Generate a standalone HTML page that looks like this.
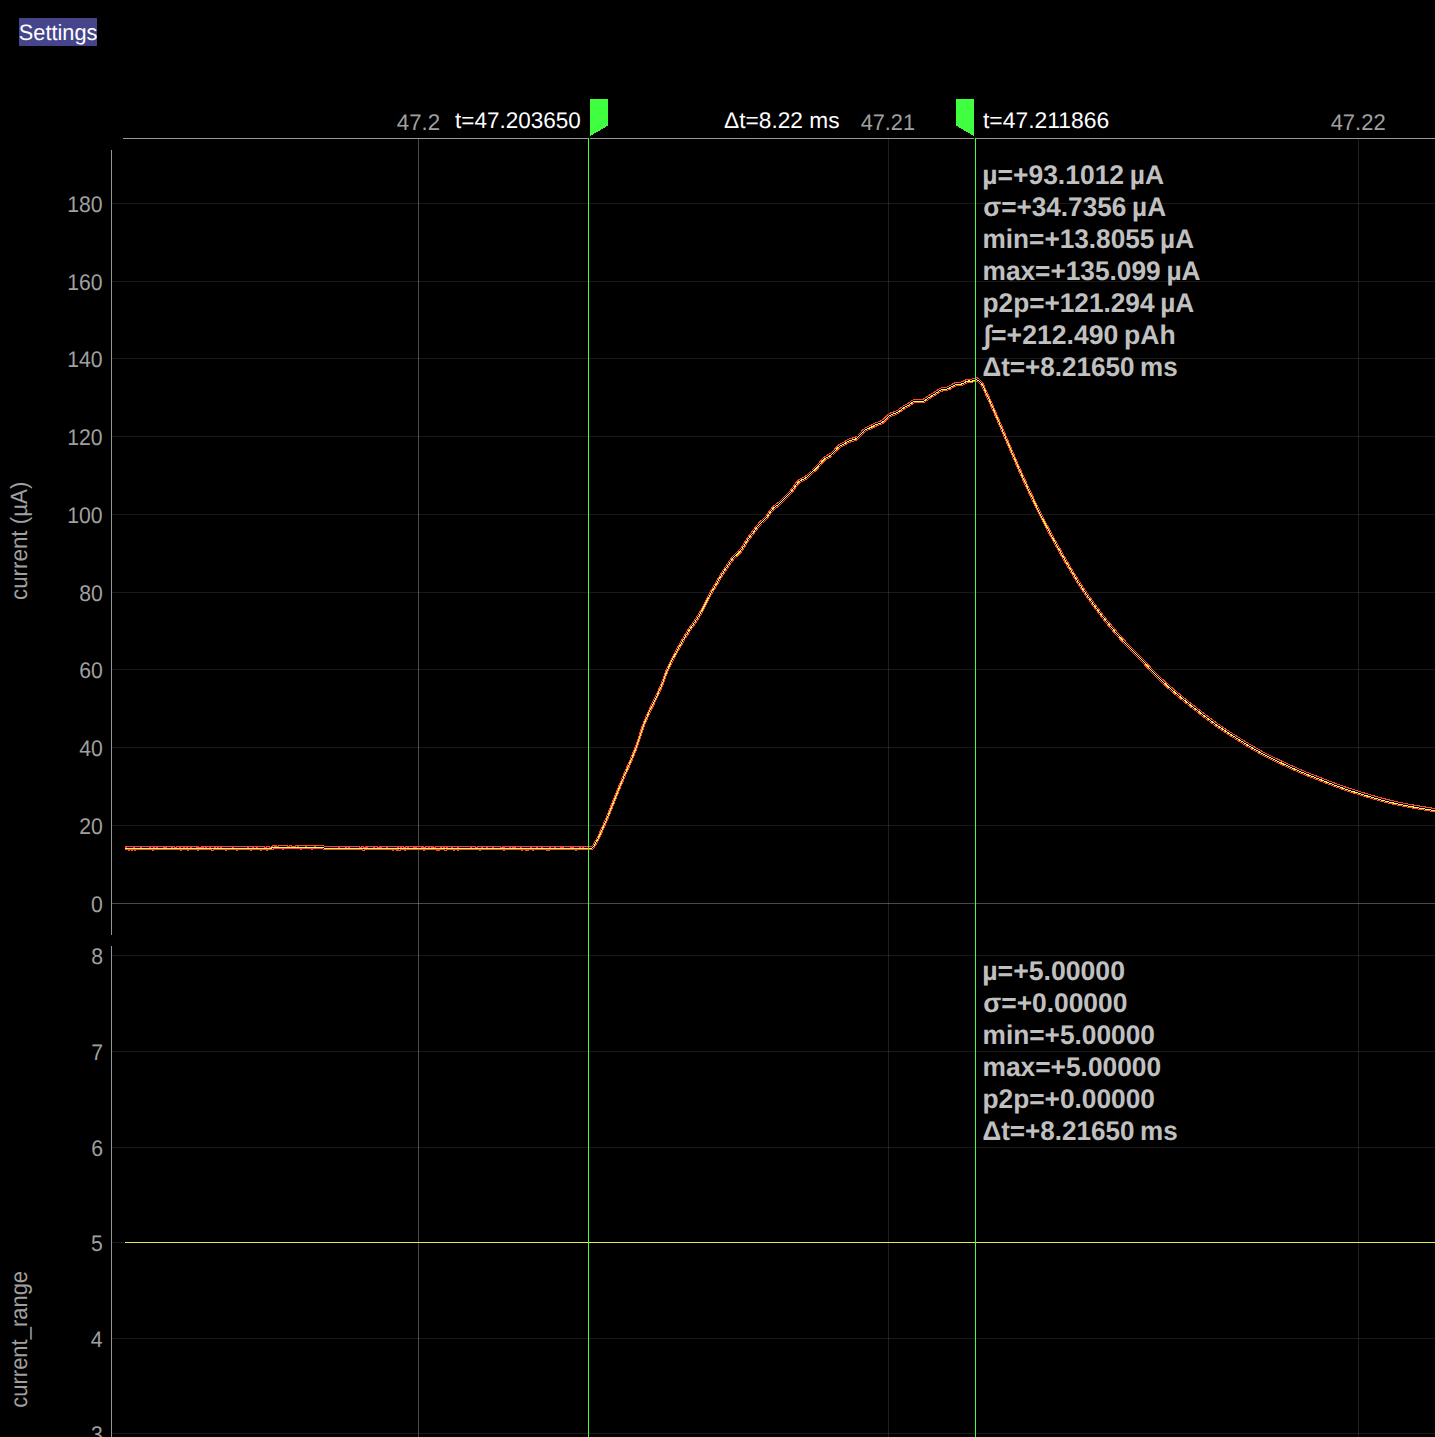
<!DOCTYPE html>
<html lang="en"><head><meta charset="utf-8"><title>Joulescope</title>
<style>
html,body{margin:0;padding:0;background:#000;}
body{width:1435px;height:1437px;overflow:hidden;position:relative;font-family:'Liberation Sans', Arial, sans-serif;}
svg{position:absolute;left:0;top:0;}
svg text{font-family:'Liberation Sans', Arial, sans-serif;white-space:pre;text-rendering:geometricPrecision;}
</style></head><body>
<svg width="1435" height="1437" viewBox="0 0 1435 1437">
<rect x="112" y="825" width="1323" height="1" fill="#969696" fill-opacity="0.17"/>
<rect x="112" y="747" width="1323" height="1" fill="#969696" fill-opacity="0.17"/>
<rect x="112" y="669" width="1323" height="1" fill="#969696" fill-opacity="0.17"/>
<rect x="112" y="592" width="1323" height="1" fill="#969696" fill-opacity="0.17"/>
<rect x="112" y="514" width="1323" height="1" fill="#969696" fill-opacity="0.17"/>
<rect x="112" y="436" width="1323" height="1" fill="#969696" fill-opacity="0.17"/>
<rect x="112" y="358" width="1323" height="1" fill="#969696" fill-opacity="0.17"/>
<rect x="112" y="281" width="1323" height="1" fill="#969696" fill-opacity="0.17"/>
<rect x="112" y="203" width="1323" height="1" fill="#969696" fill-opacity="0.17"/>
<rect x="112" y="903" width="1323" height="1" fill="#969696" fill-opacity="0.49"/>
<rect x="112" y="955" width="1323" height="1" fill="#969696" fill-opacity="0.17"/>
<rect x="112" y="1051" width="1323" height="1" fill="#969696" fill-opacity="0.17"/>
<rect x="112" y="1147" width="1323" height="1" fill="#969696" fill-opacity="0.17"/>
<rect x="112" y="1338" width="1323" height="1" fill="#969696" fill-opacity="0.17"/>
<rect x="112" y="1433" width="1323" height="1" fill="#969696" fill-opacity="0.17"/>
<rect x="112" y="1242" width="12" height="1" fill="#969696" fill-opacity="0.17"/>
<rect x="418" y="139" width="1" height="1298" fill="#969696" fill-opacity="0.49"/>
<rect x="888" y="139" width="1" height="1298" fill="#969696" fill-opacity="0.2"/>
<rect x="1358" y="139" width="1" height="1298" fill="#969696" fill-opacity="0.2"/>
<rect x="19" y="18" width="78" height="28" fill="#46458c"/>
<rect x="123" y="138" width="1312" height="1" fill="#969696"/>
<rect x="111" y="150" width="1" height="785" fill="#969696"/>
<rect x="111" y="946" width="1" height="491" fill="#969696"/>
<rect x="125" y="1242" width="1310" height="1" fill="#eaea4a"/>
<rect x="125" y="1242" width="1" height="1" fill="#ffff55"/>
<g fill="none" stroke-width="1" shape-rendering="crispEdges">
<polyline stroke="#ff4444" points="125.0,846.5 125.5,846.5 126.0,847.5 126.5,847.5 127.0,846.5 127.5,846.5 128.0,846.5 128.5,846.5 129.0,846.5 129.5,846.5 130.0,846.5 130.5,846.5 131.0,846.5 131.5,846.5 132.0,846.5 132.5,846.5 133.0,846.5 133.5,846.5 134.0,847.5 134.5,847.5 135.0,846.5 135.5,846.5 136.0,846.5 136.5,846.5 137.0,846.5 137.5,846.5 138.0,846.5 138.5,846.5 139.0,846.5 139.5,846.5 140.0,846.5 140.5,846.5 141.0,847.5 141.5,847.5 142.0,846.5 142.5,846.5 143.0,846.5 143.5,846.5 144.0,846.5 144.5,846.5 145.0,846.5 145.5,846.5 146.0,846.5 146.5,846.5 147.0,846.5 147.5,846.5 148.0,846.5 148.5,846.5 149.0,846.5 149.5,846.5 150.0,847.5 150.5,847.5 151.0,846.5 151.5,846.5 152.0,846.5 152.5,846.5 153.0,846.5 153.5,846.5 154.0,847.5 154.5,847.5 155.0,846.5 155.5,846.5 156.0,846.5 156.5,846.5 157.0,847.5 157.5,847.5 158.0,846.5 158.5,846.5 159.0,846.5 159.5,846.5 160.0,846.5 160.5,846.5 161.0,846.5 161.5,846.5 162.0,846.5 162.5,846.5 163.0,846.5 163.5,846.5 164.0,847.5 164.5,847.5 165.0,846.5 165.5,846.5 166.0,847.5 166.5,847.5 167.0,846.5 167.5,846.5 168.0,846.5 168.5,846.5 169.0,846.5 169.5,846.5 170.0,846.5 170.5,846.5 171.0,846.5 171.5,846.5 172.0,847.5 172.5,847.5 173.0,846.5 173.5,846.5 174.0,846.5 174.5,846.5 175.0,847.5 175.5,847.5 176.0,847.5 176.5,847.5 177.0,846.5 177.5,846.5 178.0,846.5 178.5,846.5 179.0,846.5 179.5,846.5 180.0,847.5 180.5,847.5 181.0,846.5 181.5,846.5 182.0,846.5 182.5,846.5 183.0,846.5 183.5,846.5 184.0,847.5 184.5,847.5 185.0,846.5 185.5,846.5 186.0,846.5 186.5,846.5 187.0,847.5 187.5,847.5 188.0,846.5 188.5,846.5 189.0,846.5 189.5,846.5 190.0,846.5 190.5,846.5 191.0,847.5 191.5,847.5 192.0,846.5 192.5,846.5 193.0,846.5 193.5,846.5 194.0,846.5 194.5,846.5 195.0,846.5 195.5,846.5 196.0,846.5 196.5,846.5 197.0,847.5 197.5,847.5 198.0,846.5 198.5,846.5 199.0,847.5 199.5,847.5 200.0,847.5 200.5,847.5 201.0,847.5 201.5,847.5 202.0,846.5 202.5,846.5 203.0,847.5 203.5,847.5 204.0,846.5 204.5,846.5 205.0,846.5 205.5,846.5 206.0,847.5 206.5,847.5 207.0,846.5 207.5,846.5 208.0,846.5 208.5,846.5 209.0,846.5 209.5,846.5 210.0,847.5 210.5,847.5 211.0,846.5 211.5,846.5 212.0,846.5 212.5,846.5 213.0,846.5 213.5,846.5 214.0,846.5 214.5,846.5 215.0,847.5 215.5,847.5 216.0,846.5 216.5,846.5 217.0,846.5 217.5,846.5 218.0,847.5 218.5,847.5 219.0,846.5 219.5,846.5 220.0,846.5 220.5,846.5 221.0,847.5 221.5,847.5 222.0,846.5 222.5,846.5 223.0,846.5 223.5,846.5 224.0,846.5 224.5,846.5 225.0,846.5 225.5,846.5 226.0,846.5 226.5,846.5 227.0,846.5 227.5,846.5 228.0,846.5 228.5,846.5 229.0,846.5 229.5,846.5 230.0,846.5 230.5,846.5 231.0,846.5 231.5,846.5 232.0,846.5 232.5,846.5 233.0,847.5 233.5,847.5 234.0,846.5 234.5,846.5 235.0,846.5 235.5,846.5 236.0,846.5 236.5,846.5 237.0,846.5 237.5,846.5 238.0,846.5 238.5,846.5 239.0,846.5 239.5,846.5 240.0,846.5 240.5,846.5 241.0,846.5 241.5,846.5 242.0,846.5 242.5,846.5 243.0,846.5 243.5,846.5 244.0,846.5 244.5,846.5 245.0,846.5 245.5,846.5 246.0,846.5 246.5,846.5 247.0,846.5 247.5,846.5 248.0,847.5 248.5,847.5 249.0,846.5 249.5,846.5 250.0,846.5 250.5,846.5 251.0,846.5 251.5,846.5 252.0,846.5 252.5,846.5 253.0,847.5 253.5,847.5 254.0,846.5 254.5,846.5 255.0,846.5 255.5,846.5 256.0,846.5 256.5,846.5 257.0,847.5 257.5,847.5 258.0,846.5 258.5,846.5 259.0,846.5 259.5,846.5 260.0,846.5 260.5,846.5 261.0,846.5 261.5,846.5 262.0,846.5 262.5,846.5 263.0,846.5 263.5,846.5 264.0,846.5 264.5,846.5 265.0,847.5 265.5,847.5 266.0,847.5 266.5,847.5 267.0,846.5 267.5,846.5 268.0,846.5 268.5,846.5 269.0,846.5 269.5,846.5 270.0,847.4 270.5,847.3 271.0,847.1 271.5,846.9 272.0,846.7 272.5,846.6 273.0,845.5 273.5,845.5 274.0,845.5 274.5,845.5 275.0,846.5 275.5,846.5 276.0,845.5 276.5,845.5 277.0,846.5 277.5,846.5 278.0,846.5 278.5,846.5 279.0,845.5 279.5,845.5 280.0,845.5 280.5,845.5 281.0,845.5 281.5,845.5 282.0,845.5 282.5,845.5 283.0,845.5 283.5,845.5 284.0,845.5 284.5,845.5 285.0,845.5 285.5,845.5 286.0,845.5 286.5,845.5 287.0,845.5 287.5,845.5 288.0,846.5 288.5,846.5 289.0,846.5 289.5,846.5 290.0,845.5 290.5,845.5 291.0,845.5 291.5,845.5 292.0,846.5 292.5,846.5 293.0,846.5 293.5,846.5 294.0,846.5 294.5,846.5 295.0,846.5 295.5,846.5 296.0,845.5 296.5,845.5 297.0,845.5 297.5,845.5 298.0,846.5 298.5,846.5 299.0,845.5 299.5,845.5 300.0,845.5 300.5,845.5 301.0,845.5 301.5,845.5 302.0,845.5 302.5,845.5 303.0,845.5 303.5,845.5 304.0,845.5 304.5,845.5 305.0,845.5 305.5,845.5 306.0,846.5 306.5,846.5 307.0,845.5 307.5,845.5 308.0,845.5 308.5,845.5 309.0,845.5 309.5,845.5 310.0,845.5 310.5,845.5 311.0,845.5 311.5,845.5 312.0,845.5 312.5,845.5 313.0,845.5 313.5,845.5 314.0,845.5 314.5,845.5 315.0,846.5 315.5,846.5 316.0,845.5 316.5,845.5 317.0,845.5 317.5,845.5 318.0,845.5 318.5,845.5 319.0,845.5 319.5,845.5 320.0,845.5 320.5,845.5 321.0,845.5 321.5,845.5 322.0,845.5 322.5,845.5 323.0,845.6 323.5,845.8 324.0,845.9 324.5,846.1 325.0,846.3 325.5,846.4 326.0,846.5 326.5,846.5 327.0,846.5 327.5,846.5 328.0,846.5 328.5,846.5 329.0,846.5 329.5,846.5 330.0,846.5 330.5,846.5 331.0,846.5 331.5,846.5 332.0,846.5 332.5,846.5 333.0,846.5 333.5,846.5 334.0,846.5 334.5,846.5 335.0,846.5 335.5,846.5 336.0,846.5 336.5,846.5 337.0,846.5 337.5,846.5 338.0,846.5 338.5,846.5 339.0,847.5 339.5,847.5 340.0,846.5 340.5,846.5 341.0,846.5 341.5,846.5 342.0,846.5 342.5,846.5 343.0,846.5 343.5,846.5 344.0,846.5 344.5,846.5 345.0,846.5 345.5,846.5 346.0,847.5 346.5,847.5 347.0,846.5 347.5,846.5 348.0,846.5 348.5,846.5 349.0,847.5 349.5,847.5 350.0,846.5 350.5,846.5 351.0,846.5 351.5,846.5 352.0,846.5 352.5,846.5 353.0,846.5 353.5,846.5 354.0,846.5 354.5,846.5 355.0,846.5 355.5,846.5 356.0,846.5 356.5,846.5 357.0,846.5 357.5,846.5 358.0,846.5 358.5,846.5 359.0,846.5 359.5,846.5 360.0,847.5 360.5,847.5 361.0,847.5 361.5,847.5 362.0,846.5 362.5,846.5 363.0,846.5 363.5,846.5 364.0,847.5 364.5,847.5 365.0,847.5 365.5,847.5 366.0,846.5 366.5,846.5 367.0,847.5 367.5,847.5 368.0,846.5 368.5,846.5 369.0,846.5 369.5,846.5 370.0,846.5 370.5,846.5 371.0,846.5 371.5,846.5 372.0,846.5 372.5,846.5 373.0,846.5 373.5,846.5 374.0,847.5 374.5,847.5 375.0,846.5 375.5,846.5 376.0,846.5 376.5,846.5 377.0,846.5 377.5,846.5 378.0,847.5 378.5,847.5 379.0,847.5 379.5,847.5 380.0,846.5 380.5,846.5 381.0,847.5 381.5,847.5 382.0,846.5 382.5,846.5 383.0,846.5 383.5,846.5 384.0,846.5 384.5,846.5 385.0,846.5 385.5,846.5 386.0,846.5 386.5,846.5 387.0,847.5 387.5,847.5 388.0,846.5 388.5,846.5 389.0,846.5 389.5,846.5 390.0,846.5 390.5,846.5 391.0,846.5 391.5,846.5 392.0,846.5 392.5,846.5 393.0,846.5 393.5,846.5 394.0,846.5 394.5,846.5 395.0,846.5 395.5,846.5 396.0,846.5 396.5,846.5 397.0,846.5 397.5,846.5 398.0,847.5 398.5,847.5 399.0,846.5 399.5,846.5 400.0,846.5 400.5,846.5 401.0,847.5 401.5,847.5 402.0,846.5 402.5,846.5 403.0,846.5 403.5,846.5 404.0,847.5 404.5,847.5 405.0,847.5 405.5,847.5 406.0,846.5 406.5,846.5 407.0,846.5 407.5,846.5 408.0,847.5 408.5,847.5 409.0,846.5 409.5,846.5 410.0,846.5 410.5,846.5 411.0,846.5 411.5,846.5 412.0,846.5 412.5,846.5 413.0,846.5 413.5,846.5 414.0,847.5 414.5,847.5 415.0,846.5 415.5,846.5 416.0,847.5 416.5,847.5 417.0,846.5 417.5,846.5 418.0,846.5 418.5,846.5 419.0,846.5 419.5,846.5 420.0,846.5 420.5,846.5 421.0,846.5 421.5,846.5 422.0,847.5 422.5,847.5 423.0,846.5 423.5,846.5 424.0,847.5 424.5,847.5 425.0,847.5 425.5,847.5 426.0,846.5 426.5,846.5 427.0,846.5 427.5,846.5 428.0,846.5 428.5,846.5 429.0,847.5 429.5,847.5 430.0,846.5 430.5,846.5 431.0,846.5 431.5,846.5 432.0,847.5 432.5,847.5 433.0,846.5 433.5,846.5 434.0,847.5 434.5,847.5 435.0,847.5 435.5,847.5 436.0,846.5 436.5,846.5 437.0,846.5 437.5,846.5 438.0,846.5 438.5,846.5 439.0,846.5 439.5,846.5 440.0,846.5 440.5,846.5 441.0,847.5 441.5,847.5 442.0,846.5 442.5,846.5 443.0,846.5 443.5,846.5 444.0,847.5 444.5,847.5 445.0,846.5 445.5,846.5 446.0,846.5 446.5,846.5 447.0,847.5 447.5,847.5 448.0,846.5 448.5,846.5 449.0,846.5 449.5,846.5 450.0,846.5 450.5,846.5 451.0,846.5 451.5,846.5 452.0,847.5 452.5,847.5 453.0,846.5 453.5,846.5 454.0,846.5 454.5,846.5 455.0,846.5 455.5,846.5 456.0,846.5 456.5,846.5 457.0,846.5 457.5,846.5 458.0,847.5 458.5,847.5 459.0,846.5 459.5,846.5 460.0,846.5 460.5,846.5 461.0,846.5 461.5,846.5 462.0,846.5 462.5,846.5 463.0,846.5 463.5,846.5 464.0,846.5 464.5,846.5 465.0,846.5 465.5,846.5 466.0,846.5 466.5,846.5 467.0,846.5 467.5,846.5 468.0,846.5 468.5,846.5 469.0,846.5 469.5,846.5 470.0,846.5 470.5,846.5 471.0,847.5 471.5,847.5 472.0,846.5 472.5,846.5 473.0,846.5 473.5,846.5 474.0,846.5 474.5,846.5 475.0,846.5 475.5,846.5 476.0,847.5 476.5,847.5 477.0,847.5 477.5,847.5 478.0,846.5 478.5,846.5 479.0,846.5 479.5,846.5 480.0,846.5 480.5,846.5 481.0,846.5 481.5,846.5 482.0,847.5 482.5,847.5 483.0,846.5 483.5,846.5 484.0,846.5 484.5,846.5 485.0,846.5 485.5,846.5 486.0,846.5 486.5,846.5 487.0,847.5 487.5,847.5 488.0,846.5 488.5,846.5 489.0,846.5 489.5,846.5 490.0,846.5 490.5,846.5 491.0,846.5 491.5,846.5 492.0,846.5 492.5,846.5 493.0,847.5 493.5,847.5 494.0,846.5 494.5,846.5 495.0,846.5 495.5,846.5 496.0,846.5 496.5,846.5 497.0,846.5 497.5,846.5 498.0,846.5 498.5,846.5 499.0,846.5 499.5,846.5 500.0,846.5 500.5,846.5 501.0,847.5 501.5,847.5 502.0,847.5 502.5,847.5 503.0,846.5 503.5,846.5 504.0,847.5 504.5,847.5 505.0,846.5 505.5,846.5 506.0,846.5 506.5,846.5 507.0,846.5 507.5,846.5 508.0,846.5 508.5,846.5 509.0,846.5 509.5,846.5 510.0,847.5 510.5,847.5 511.0,846.5 511.5,846.5 512.0,846.5 512.5,846.5 513.0,847.5 513.5,847.5 514.0,846.5 514.5,846.5 515.0,847.5 515.5,847.5 516.0,846.5 516.5,846.5 517.0,846.5 517.5,846.5 518.0,846.5 518.5,846.5 519.0,846.5 519.5,846.5 520.0,846.5 520.5,846.5 521.0,847.5 521.5,847.5 522.0,846.5 522.5,846.5 523.0,846.5 523.5,846.5 524.0,846.5 524.5,846.5 525.0,846.5 525.5,846.5 526.0,846.5 526.5,846.5 527.0,846.5 527.5,846.5 528.0,846.5 528.5,846.5 529.0,846.5 529.5,846.5 530.0,846.5 530.5,846.5 531.0,847.5 531.5,847.5 532.0,846.5 532.5,846.5 533.0,846.5 533.5,846.5 534.0,846.5 534.5,846.5 535.0,846.5 535.5,846.5 536.0,846.5 536.5,846.5 537.0,847.5 537.5,847.5 538.0,846.5 538.5,846.5 539.0,846.5 539.5,846.5 540.0,846.5 540.5,846.5 541.0,846.5 541.5,846.5 542.0,847.5 542.5,847.5 543.0,846.5 543.5,846.5 544.0,846.5 544.5,846.5 545.0,846.5 545.5,846.5 546.0,846.5 546.5,846.5 547.0,846.5 547.5,846.5 548.0,846.5 548.5,846.5 549.0,846.5 549.5,846.5 550.0,847.5 550.5,847.5 551.0,846.5 551.5,846.5 552.0,846.5 552.5,846.5 553.0,846.5 553.5,846.5 554.0,846.5 554.5,846.5 555.0,847.5 555.5,847.5 556.0,846.5 556.5,846.5 557.0,846.5 557.5,846.5 558.0,846.5 558.5,846.5 559.0,846.5 559.5,846.5 560.0,846.5 560.5,846.5 561.0,847.5 561.5,847.5 562.0,846.5 562.5,846.5 563.0,847.5 563.5,847.5 564.0,846.5 564.5,846.5 565.0,846.5 565.5,846.5 566.0,846.5 566.5,846.5 567.0,846.5 567.5,846.5 568.0,846.5 568.5,846.5 569.0,846.5 569.5,846.5 570.0,846.5 570.5,846.5 571.0,847.5 571.5,847.5 572.0,846.5 572.5,846.5 573.0,847.5 573.5,847.5 574.0,846.5 574.5,846.5 575.0,846.5 575.5,846.5 576.0,846.5 576.5,846.5 577.0,846.5 577.5,846.5 578.0,846.5 578.5,846.5 579.0,846.5 579.5,846.5 580.0,847.5 580.5,847.5 581.0,846.5 581.5,846.5 582.0,846.5 582.5,846.5 583.0,847.5 583.5,847.5 584.0,846.5 584.5,846.5 585.0,846.5 585.5,846.5 586.0,846.5 586.5,846.5 587.0,846.5 587.5,846.5 588.0,846.5 588.5,846.5 589.0,846.5 589.5,846.5 590.0,846.4 590.5,846.4 591.0,846.3 591.5,846.1 592.0,845.9 592.5,845.4 593.0,844.8 593.5,844.0 594.0,843.2 594.5,842.3 595.0,841.4 595.5,840.5 596.0,839.7 596.5,838.8 597.0,837.9 597.5,837.0 598.0,836.0 598.5,834.9 599.0,833.9 599.5,832.8 600.0,831.6 600.5,830.5 601.0,829.4 601.5,828.2 602.0,827.0 602.5,825.9 603.0,824.7 603.5,823.6 604.0,822.4 604.5,821.3 605.0,820.1 605.5,819.0 606.0,817.8 606.5,816.6 607.0,815.4 607.5,814.2 608.0,813.0 608.5,811.8 609.0,810.6 609.5,809.3 610.0,808.1 610.5,806.9 611.0,805.6 611.5,804.4 612.0,803.1 612.5,801.9 613.0,800.6 613.5,799.4 614.0,798.1 614.5,796.9 615.0,795.6 615.5,794.4 616.0,793.1 616.5,791.9 617.0,790.6 617.5,789.4 618.0,788.1 618.5,786.9 619.0,785.6 619.5,784.4 620.0,783.2 620.5,781.9 621.0,780.7 621.5,779.5 622.0,778.3 622.5,777.1 623.0,775.9 623.5,774.7 624.0,773.5 624.5,772.4 625.0,771.2 625.5,770.1 626.0,768.9 626.5,767.8 627.0,766.6 627.5,765.5 628.0,764.4 628.5,763.2 629.0,762.1 629.5,760.9 630.0,759.8 630.5,758.6 631.0,757.4 631.5,756.2 632.0,755.0 632.5,753.8 633.0,752.6 633.5,751.4 634.0,750.1 634.5,748.8 635.0,747.5 635.5,746.2 636.0,744.9 636.5,743.5 637.0,742.0 637.5,740.5 638.0,739.0 638.5,737.4 639.0,735.8 639.5,734.2 640.0,732.6 640.5,731.1 641.0,729.5 641.5,728.0 642.0,726.5 642.5,725.1 643.0,723.8 643.5,722.5 644.0,721.2 644.5,719.9 645.0,718.7 645.5,717.5 646.0,716.4 646.5,715.2 647.0,714.1 647.5,712.9 648.0,711.8 648.5,710.7 649.0,709.7 649.5,708.6 650.0,707.5 650.5,706.5 651.0,705.4 651.5,704.4 652.0,703.4 652.5,702.3 653.0,701.3 653.5,700.3 654.0,699.2 654.5,698.2 655.0,697.2 655.5,696.1 656.0,695.1 656.5,694.0 657.0,693.0 657.5,691.9 658.0,690.8 658.5,689.7 659.0,688.6 659.5,687.4 660.0,686.3 660.5,685.1 661.0,683.9 661.5,682.7 662.0,681.4 662.5,680.1 663.0,678.8 663.5,677.3 664.0,675.9 664.5,674.5 665.0,673.1 665.5,671.8 666.0,670.5 666.5,669.4 667.0,668.2 667.5,667.1 668.0,666.0 668.5,664.9 669.0,663.8 669.5,662.8 670.0,661.7 670.5,660.7 671.0,659.7 671.5,658.7 672.0,657.7 672.5,656.7 673.0,655.7 673.5,654.7 674.0,653.8 674.5,652.8 675.0,651.9 675.5,651.0 676.0,650.0 676.5,649.1 677.0,648.2 677.5,647.3 678.0,646.4 678.5,645.6 679.0,644.7 679.5,643.8 680.0,642.9 680.5,642.1 681.0,641.2 681.5,640.4 682.0,639.5 682.5,638.7 683.0,637.8 683.5,637.0 684.0,636.1 684.5,635.3 685.0,634.4 685.5,633.6 686.0,632.8 686.5,632.0 687.0,631.2 687.5,630.4 688.0,629.6 688.5,628.9 689.0,628.1 689.5,627.4 690.0,626.6 690.5,625.9 691.0,625.1 691.5,624.4 692.0,623.7 692.5,623.0 693.0,622.2 693.5,621.5 694.0,620.8 694.5,620.0 695.0,619.3 695.5,618.6 696.0,617.8 696.5,617.1 697.0,616.3 697.5,615.5 698.0,614.8 698.5,614.0 699.0,613.2 699.5,612.3 700.0,611.5 700.5,610.6 701.0,609.7 701.5,608.8 702.0,607.8 702.5,606.9 703.0,605.9 703.5,604.9 704.0,603.9 704.5,602.9 705.0,601.9 705.5,600.9 706.0,599.9 706.5,598.9 707.0,597.9 707.5,596.9 708.0,595.9 708.5,595.0 709.0,594.1 709.5,593.1 710.0,592.2 710.5,591.3 711.0,590.5 711.5,589.6 712.0,588.7 712.5,587.9 713.0,587.1 713.5,586.2 714.0,585.4 714.5,584.5 715.0,583.7 715.5,582.9 716.0,582.0 716.5,581.1 717.0,580.2 717.5,579.4 718.0,578.5 718.5,577.6 719.0,576.7 719.5,575.9 720.0,575.0 720.5,574.2 721.0,573.4 721.5,572.6 722.0,571.8 722.5,571.0 723.0,570.2 723.5,569.4 724.0,568.7 724.5,567.9 725.0,567.2 725.5,566.5 726.0,565.7 726.5,565.0 727.0,564.2 727.5,563.5 728.0,562.8 728.5,562.0 729.0,561.3 729.5,560.6 730.0,559.8 730.5,559.2 731.0,558.5 731.5,557.8 732.0,557.2 732.5,556.6 733.0,556.0 733.5,555.5 734.0,555.0 734.5,554.5 735.0,554.0 735.5,553.6 736.0,553.2 736.5,552.7 737.0,552.3 737.5,551.8 738.0,551.3 738.5,550.9 739.0,550.3 739.5,549.8 740.0,549.2 740.5,548.5 741.0,547.8 741.5,547.1 742.0,546.4 742.5,545.6 743.0,544.8 743.5,544.0 744.0,543.2 744.5,542.4 745.0,541.5 745.5,540.7 746.0,539.9 746.5,539.1 747.0,538.4 747.5,537.6 748.0,536.9 748.5,536.2 749.0,535.5 749.5,534.9 750.0,534.2 750.5,533.6 751.0,532.9 751.5,532.3 752.0,531.6 752.5,531.0 753.0,530.3 753.5,529.7 754.0,529.0 754.5,528.3 755.0,527.6 755.5,526.9 756.0,526.3 756.5,525.6 757.0,525.0 757.5,524.3 758.0,523.7 758.5,523.2 759.0,522.6 759.5,522.1 760.0,521.6 760.5,521.2 761.0,520.7 761.5,520.3 762.0,519.8 762.5,519.4 763.0,518.9 763.5,518.4 764.0,517.9 764.5,517.4 765.0,516.9 765.5,516.3 766.0,515.7 766.5,515.0 767.0,514.4 767.5,513.7 768.0,512.9 768.5,512.2 769.0,511.5 769.5,510.8 770.0,510.1 770.5,509.4 771.0,508.7 771.5,508.1 772.0,507.5 772.5,507.0 773.0,506.5 773.5,506.0 774.0,505.6 774.5,505.2 775.0,504.8 775.5,504.4 776.0,504.1 776.5,503.8 777.0,503.4 777.5,503.1 778.0,502.7 778.5,502.3 779.0,501.9 779.5,501.5 780.0,501.1 780.5,500.6 781.0,500.1 781.5,499.6 782.0,499.1 782.5,498.6 783.0,498.0 783.5,497.5 784.0,497.0 784.5,496.4 785.0,495.9 785.5,495.4 786.0,494.9 786.5,494.4 787.0,493.9 787.5,493.4 788.0,492.9 788.5,492.4 789.0,491.9 789.5,491.3 790.0,490.8 790.5,490.2 791.0,489.5 791.5,488.9 792.0,488.2 792.5,487.5 793.0,486.8 793.5,486.1 794.0,485.4 794.5,484.7 795.0,484.0 795.5,483.3 796.0,482.6 796.5,482.0 797.0,481.4 797.5,480.8 798.0,480.4 798.5,479.9 799.0,479.5 799.5,479.2 800.0,478.8 800.5,478.6 801.0,478.3 801.5,478.1 802.0,477.9 802.5,477.6 803.0,477.4 803.5,477.2 804.0,476.9 804.5,476.7 805.0,476.3 805.5,476.0 806.0,475.6 806.5,475.2 807.0,474.8 807.5,474.4 808.0,473.9 808.5,473.4 809.0,472.9 809.5,472.4 810.0,471.9 810.5,471.4 811.0,470.9 811.5,470.5 812.0,470.0 812.5,469.5 813.0,469.1 813.5,468.6 814.0,468.1 814.5,467.7 815.0,467.2 815.5,466.7 816.0,466.2 816.5,465.7 817.0,465.2 817.5,464.6 818.0,464.1 818.5,463.5 819.0,462.9 819.5,462.2 820.0,461.6 820.5,461.0 821.0,460.4 821.5,459.8 822.0,459.2 822.5,458.7 823.0,458.2 823.5,457.7 824.0,457.3 824.5,456.9 825.0,456.5 825.5,456.2 826.0,455.9 826.5,455.6 827.0,455.3 827.5,455.1 828.0,454.8 828.5,454.5 829.0,454.2 829.5,453.9 830.0,453.6 830.5,453.2 831.0,452.8 831.5,452.3 832.0,451.9 832.5,451.3 833.0,450.8 833.5,450.3 834.0,449.7 834.5,449.1 835.0,448.5 835.5,448.0 836.0,447.4 836.5,446.9 837.0,446.4 837.5,446.0 838.0,445.5 838.5,445.1 839.0,444.7 839.5,444.4 840.0,444.1 840.5,443.8 841.0,443.5 841.5,443.2 842.0,443.0 842.5,442.7 843.0,442.4 843.5,442.1 844.0,441.9 844.5,441.6 845.0,441.3 845.5,441.0 846.0,440.7 846.5,440.4 847.0,440.1 847.5,439.8 848.0,439.5 848.5,439.3 849.0,439.1 849.5,438.9 850.0,438.7 850.5,438.5 851.0,438.4 851.5,438.3 852.0,438.2 852.5,438.0 853.0,437.9 853.5,437.8 854.0,437.6 854.5,437.4 855.0,437.2 855.5,437.0 856.0,436.7 856.5,436.3 857.0,435.9 857.5,435.5 858.0,435.0 858.5,434.5 859.0,434.0 859.5,433.4 860.0,432.9 860.5,432.3 861.0,431.7 861.5,431.1 862.0,430.6 862.5,430.1 863.0,429.6 863.5,429.2 864.0,428.8 864.5,428.4 865.0,428.1 865.5,427.8 866.0,427.5 866.5,427.3 867.0,427.0 867.5,426.8 868.0,426.6 868.5,426.4 869.0,426.2 869.5,425.9 870.0,425.7 870.5,425.5 871.0,425.2 871.5,425.0 872.0,424.7 872.5,424.4 873.0,424.1 873.5,423.9 874.0,423.6 874.5,423.3 875.0,423.1 875.5,422.9 876.0,422.7 876.5,422.5 877.0,422.3 877.5,422.1 878.0,422.0 878.5,421.8 879.0,421.6 879.5,421.4 880.0,421.2 880.5,421.0 881.0,420.8 881.5,420.5 882.0,420.2 882.5,419.8 883.0,419.4 883.5,419.0 884.0,418.5 884.5,418.1 885.0,417.6 885.5,417.1 886.0,416.6 886.5,416.1 887.0,415.6 887.5,415.1 888.0,414.7 888.5,414.3 889.0,413.9 889.5,413.6 890.0,413.3 890.5,413.0 891.0,412.8 891.5,412.6 892.0,412.5 892.5,412.3 893.0,412.2 893.5,412.0 894.0,411.9 894.5,411.7 895.0,411.5 895.5,411.3 896.0,411.1 896.5,410.8 897.0,410.5 897.5,410.2 898.0,409.8 898.5,409.5 899.0,409.1 899.5,408.7 900.0,408.3 900.5,407.9 901.0,407.6 901.5,407.2 902.0,406.9 902.5,406.5 903.0,406.2 903.5,405.9 904.0,405.6 904.5,405.3 905.0,405.0 905.5,404.8 906.0,404.5 906.5,404.2 907.0,403.9 907.5,403.6 908.0,403.3 908.5,403.0 909.0,402.6 909.5,402.3 910.0,401.9 910.5,401.6 911.0,401.2 911.5,400.9 912.0,400.6 912.5,400.3 913.0,400.0 913.5,399.8 914.0,399.6 914.5,399.4 915.0,399.3 915.5,399.3 916.0,399.2 916.5,399.2 917.0,399.2 917.5,399.3 918.0,399.3 918.5,399.4 919.0,399.4 919.5,399.5 920.0,399.6 920.5,399.7 921.0,399.7 921.5,399.7 922.0,399.6 922.5,399.5 923.0,399.3 923.5,399.0 924.0,398.8 924.5,398.5 925.0,398.2 925.5,397.8 926.0,397.5 926.5,397.1 927.0,396.7 927.5,396.4 928.0,396.0 928.5,395.7 929.0,395.3 929.5,395.0 930.0,394.7 930.5,394.4 931.0,394.1 931.5,393.8 932.0,393.6 932.5,393.3 933.0,393.0 933.5,392.7 934.0,392.4 934.5,392.0 935.0,391.7 935.5,391.4 936.0,391.0 936.5,390.6 937.0,390.3 937.5,389.9 938.0,389.6 938.5,389.3 939.0,389.0 939.5,388.7 940.0,388.4 940.5,388.2 941.0,388.0 941.5,387.9 942.0,387.8 942.5,387.7 943.0,387.6 943.5,387.6 944.0,387.5 944.5,387.5 945.0,387.5 945.5,387.4 946.0,387.3 946.5,387.2 947.0,387.1 947.5,386.9 948.0,386.7 948.5,386.5 949.0,386.2 949.5,385.9 950.0,385.6 950.5,385.3 951.0,385.0 951.5,384.6 952.0,384.3 952.5,384.0 953.0,383.7 953.5,383.5 954.0,383.2 954.5,383.0 955.0,382.9 955.5,382.7 956.0,382.6 956.5,382.5 957.0,382.5 957.5,382.5 958.0,382.4 958.5,382.4 959.0,382.4 959.5,382.3 960.0,382.3 960.5,382.2 961.0,382.1 961.5,382.0 962.0,381.8 962.5,381.6 963.0,381.4 963.5,381.1 964.0,380.8 964.5,380.5 965.0,380.3 965.5,380.0 966.0,379.7 966.5,379.5 967.0,379.3 967.5,379.2 968.0,379.1 968.5,379.0 969.0,379.0 969.5,379.0 970.0,379.0 970.5,379.0 971.0,379.1 971.5,379.2 972.0,379.1 972.5,378.9 973.0,378.7 973.5,378.5 974.0,378.3 974.5,378.1 975.0,378.0 975.5,377.8 976.0,377.8 976.5,377.8 977.0,377.9 977.5,378.0 978.0,378.3 978.5,378.7 979.0,379.0 979.5,379.5 980.0,379.9 980.5,380.4 981.0,380.9 981.5,381.4 982.0,382.0 982.5,382.7 983.0,383.5 983.5,384.5 984.0,385.5 984.5,386.6 985.0,387.7 985.5,388.8 986.0,390.0 986.5,391.1 987.0,392.3 987.5,393.4 988.0,394.4 988.5,395.5 989.0,396.6 989.5,397.6 990.0,398.7 990.5,399.8 991.0,400.9 991.5,402.1 992.0,403.2 992.5,404.3 993.0,405.4 993.5,406.6 994.0,407.7 994.5,408.9 995.0,410.0 995.5,411.2 996.0,412.4 996.5,413.5 997.0,414.7 997.5,415.9 998.0,417.0 998.5,418.2 999.0,419.4 999.5,420.6 1000.0,421.8 1000.5,422.9 1001.0,424.1 1001.5,425.3 1002.0,426.5 1002.5,427.6 1003.0,428.8 1003.5,430.0 1004.0,431.1 1004.5,432.3 1005.0,433.4 1005.5,434.6 1006.0,435.8 1006.5,436.9 1007.0,438.1 1007.5,439.2 1008.0,440.4 1008.5,441.5 1009.0,442.7 1009.5,443.9 1010.0,445.0 1010.5,446.2 1011.0,447.4 1011.5,448.5 1012.0,449.7 1012.5,450.9 1013.0,452.1 1013.5,453.2 1014.0,454.4 1014.5,455.6 1015.0,456.7 1015.5,457.9 1016.0,459.0 1016.5,460.2 1017.0,461.4 1017.5,462.5 1018.0,463.7 1018.5,464.8 1019.0,466.0 1019.5,467.1 1020.0,468.2 1020.5,469.4 1021.0,470.5 1021.5,471.6 1022.0,472.7 1022.5,473.9 1023.0,475.0 1023.5,476.1 1024.0,477.2 1024.5,478.3 1025.0,479.4 1025.5,480.5 1026.0,481.5 1026.5,482.6 1027.0,483.7 1027.5,484.8 1028.0,485.9 1028.5,487.0 1029.0,488.1 1029.5,489.1 1030.0,490.2 1030.5,491.3 1031.0,492.3 1031.5,493.4 1032.0,494.5 1032.5,495.5 1033.0,496.6 1033.5,497.6 1034.0,498.7 1034.5,499.7 1035.0,500.8 1035.5,501.8 1036.0,502.8 1036.5,503.9 1037.0,504.9 1037.5,505.9 1038.0,507.0 1038.5,508.0 1039.0,509.0 1039.5,510.0 1040.0,511.0 1040.5,512.0 1041.0,513.0 1041.5,514.0 1042.0,515.0 1042.5,516.0 1043.0,517.0 1043.5,517.9 1044.0,518.9 1044.5,519.9 1045.0,520.9 1045.5,521.8 1046.0,522.8 1046.5,523.8 1047.0,524.7 1047.5,525.7 1048.0,526.6 1048.5,527.6 1049.0,528.5 1049.5,529.5 1050.0,530.4 1050.5,531.3 1051.0,532.3 1051.5,533.2 1052.0,534.1 1052.5,535.1 1053.0,536.0 1053.5,536.9 1054.0,537.8 1054.5,538.7 1055.0,539.7 1055.5,540.6 1056.0,541.5 1056.5,542.4 1057.0,543.3 1057.5,544.2 1058.0,545.1 1058.5,546.0 1059.0,546.9 1059.5,547.7 1060.0,548.6 1060.5,549.5 1061.0,550.4 1061.5,551.3 1062.0,552.2 1062.5,553.1 1063.0,553.9 1063.5,554.8 1064.0,555.7 1064.5,556.6 1065.0,557.4 1065.5,558.3 1066.0,559.2 1066.5,560.0 1067.0,560.9 1067.5,561.8 1068.0,562.6 1068.5,563.5 1069.0,564.4 1069.5,565.2 1070.0,566.1 1070.5,566.9 1071.0,567.7 1071.5,568.6 1072.0,569.4 1072.5,570.3 1073.0,571.1 1073.5,571.9 1074.0,572.7 1074.5,573.6 1075.0,574.4 1075.5,575.2 1076.0,576.0 1076.5,576.8 1077.0,577.6 1077.5,578.4 1078.0,579.2 1078.5,580.0 1079.0,580.8 1079.5,581.6 1080.0,582.3 1080.5,583.1 1081.0,583.9 1081.5,584.6 1082.0,585.4 1082.5,586.2 1083.0,586.9 1083.5,587.7 1084.0,588.4 1084.5,589.1 1085.0,589.9 1085.5,590.6 1086.0,591.3 1086.5,592.1 1087.0,592.8 1087.5,593.5 1088.0,594.3 1088.5,595.0 1089.0,595.7 1089.5,596.4 1090.0,597.1 1090.5,597.8 1091.0,598.5 1091.5,599.2 1092.0,599.9 1092.5,600.6 1093.0,601.3 1093.5,602.0 1094.0,602.7 1094.5,603.4 1095.0,604.1 1095.5,604.7 1096.0,605.4 1096.5,606.1 1097.0,606.8 1097.5,607.4 1098.0,608.1 1098.5,608.8 1099.0,609.4 1099.5,610.1 1100.0,610.8 1100.5,611.4 1101.0,612.1 1101.5,612.7 1102.0,613.4 1102.5,614.0 1103.0,614.7 1103.5,615.3 1104.0,615.9 1104.5,616.6 1105.0,617.2 1105.5,617.8 1106.0,618.5 1106.5,619.1 1107.0,619.7 1107.5,620.3 1108.0,621.0 1108.5,621.6 1109.0,622.2 1109.5,622.8 1110.0,623.4 1110.5,624.0 1111.0,624.6 1111.5,625.2 1112.0,625.8 1112.5,626.4 1113.0,627.0 1113.5,627.6 1114.0,628.2 1114.5,628.8 1115.0,629.4 1115.5,630.0 1116.0,630.6 1116.5,631.2 1117.0,631.7 1117.5,632.3 1118.0,632.9 1118.5,633.4 1119.0,634.0 1119.5,634.6 1120.0,635.1 1120.5,635.7 1121.0,636.3 1121.5,636.8 1122.0,637.4 1122.5,637.9 1123.0,638.5 1123.5,639.0 1124.0,639.6 1124.5,640.1 1125.0,640.7 1125.5,641.2 1126.0,641.8 1126.5,642.3 1127.0,642.8 1127.5,643.4 1128.0,643.9 1128.5,644.4 1129.0,645.0 1129.5,645.5 1130.0,646.0 1130.5,646.5 1131.0,647.0 1131.5,647.5 1132.0,648.0 1132.5,648.5 1133.0,649.0 1133.5,649.5 1134.0,650.0 1134.5,650.5 1135.0,650.9 1135.5,651.4 1136.0,651.9 1136.5,652.4 1137.0,652.9 1137.5,653.4 1138.0,653.9 1138.5,654.4 1139.0,654.9 1139.5,655.4 1140.0,655.9 1140.5,656.4 1141.0,656.9 1141.5,657.4 1142.0,657.9 1142.5,658.4 1143.0,658.9 1143.5,659.5 1144.0,660.0 1144.5,660.5 1145.0,661.1 1145.5,661.6 1146.0,662.2 1146.5,662.7 1147.0,663.3 1147.5,663.8 1148.0,664.4 1148.5,664.9 1149.0,665.5 1149.5,666.0 1150.0,666.6 1150.5,667.2 1151.0,667.7 1151.5,668.3 1152.0,668.8 1152.5,669.3 1153.0,669.9 1153.5,670.4 1154.0,670.9 1154.5,671.5 1155.0,672.0 1155.5,672.5 1156.0,673.0 1156.5,673.5 1157.0,674.0 1157.5,674.5 1158.0,675.0 1158.5,675.4 1159.0,675.9 1159.5,676.4 1160.0,676.9 1160.5,677.4 1161.0,677.8 1161.5,678.3 1162.0,678.8 1162.5,679.2 1163.0,679.7 1163.5,680.1 1164.0,680.6 1164.5,681.1 1165.0,681.5 1165.5,682.0 1166.0,682.4 1166.5,682.9 1167.0,683.3 1167.5,683.8 1168.0,684.2 1168.5,684.7 1169.0,685.1 1169.5,685.5 1170.0,686.0 1170.5,686.4 1171.0,686.8 1171.5,687.3 1172.0,687.7 1172.5,688.1 1173.0,688.6 1173.5,689.0 1174.0,689.4 1174.5,689.9 1175.0,690.3 1175.5,690.7 1176.0,691.1 1176.5,691.6 1177.0,692.0 1177.5,692.4 1178.0,692.8 1178.5,693.3 1179.0,693.7 1179.5,694.1 1180.0,694.5 1180.5,694.9 1181.0,695.3 1181.5,695.8 1182.0,696.2 1182.5,696.6 1183.0,697.0 1183.5,697.4 1184.0,697.8 1184.5,698.2 1185.0,698.6 1185.5,699.0 1186.0,699.4 1186.5,699.8 1187.0,700.2 1187.5,700.6 1188.0,701.0 1188.5,701.4 1189.0,701.8 1189.5,702.2 1190.0,702.6 1190.5,702.9 1191.0,703.3 1191.5,703.7 1192.0,704.1 1192.5,704.5 1193.0,704.9 1193.5,705.3 1194.0,705.7 1194.5,706.1 1195.0,706.5 1195.5,706.8 1196.0,707.2 1196.5,707.6 1197.0,708.0 1197.5,708.4 1198.0,708.8 1198.5,709.2 1199.0,709.6 1199.5,709.9 1200.0,710.3 1200.5,710.7 1201.0,711.1 1201.5,711.5 1202.0,711.9 1202.5,712.3 1203.0,712.6 1203.5,713.0 1204.0,713.4 1204.5,713.8 1205.0,714.2 1205.5,714.6 1206.0,715.0 1206.5,715.3 1207.0,715.7 1207.5,716.1 1208.0,716.5 1208.5,716.9 1209.0,717.2 1209.5,717.6 1210.0,718.0 1210.5,718.4 1211.0,718.7 1211.5,719.1 1212.0,719.5 1212.5,719.9 1213.0,720.2 1213.5,720.6 1214.0,721.0 1214.5,721.3 1215.0,721.7 1215.5,722.1 1216.0,722.4 1216.5,722.8 1217.0,723.1 1217.5,723.5 1218.0,723.8 1218.5,724.2 1219.0,724.5 1219.5,724.9 1220.0,725.2 1220.5,725.6 1221.0,725.9 1221.5,726.3 1222.0,726.6 1222.5,726.9 1223.0,727.3 1223.5,727.6 1224.0,727.9 1224.5,728.3 1225.0,728.6 1225.5,728.9 1226.0,729.3 1226.5,729.6 1227.0,729.9 1227.5,730.3 1228.0,730.6 1228.5,730.9 1229.0,731.2 1229.5,731.6 1230.0,731.9 1230.5,732.2 1231.0,732.5 1231.5,732.8 1232.0,733.2 1232.5,733.5 1233.0,733.8 1233.5,734.1 1234.0,734.4 1234.5,734.7 1235.0,735.1 1235.5,735.4 1236.0,735.7 1236.5,736.0 1237.0,736.3 1237.5,736.6 1238.0,736.9 1238.5,737.3 1239.0,737.6 1239.5,737.9 1240.0,738.2 1240.5,738.5 1241.0,738.8 1241.5,739.1 1242.0,739.4 1242.5,739.7 1243.0,740.1 1243.5,740.4 1244.0,740.7 1244.5,741.0 1245.0,741.3 1245.5,741.6 1246.0,741.9 1246.5,742.2 1247.0,742.5 1247.5,742.8 1248.0,743.1 1248.5,743.5 1249.0,743.8 1249.5,744.1 1250.0,744.4 1250.5,744.7 1251.0,745.0 1251.5,745.3 1252.0,745.6 1252.5,745.9 1253.0,746.2 1253.5,746.5 1254.0,746.8 1254.5,747.0 1255.0,747.3 1255.5,747.6 1256.0,747.9 1256.5,748.2 1257.0,748.5 1257.5,748.8 1258.0,749.1 1258.5,749.3 1259.0,749.6 1259.5,749.9 1260.0,750.2 1260.5,750.4 1261.0,750.7 1261.5,751.0 1262.0,751.3 1262.5,751.5 1263.0,751.8 1263.5,752.1 1264.0,752.3 1264.5,752.6 1265.0,752.8 1265.5,753.1 1266.0,753.4 1266.5,753.6 1267.0,753.9 1267.5,754.1 1268.0,754.4 1268.5,754.6 1269.0,754.9 1269.5,755.1 1270.0,755.4 1270.5,755.6 1271.0,755.9 1271.5,756.1 1272.0,756.4 1272.5,756.6 1273.0,756.9 1273.5,757.1 1274.0,757.4 1274.5,757.6 1275.0,757.8 1275.5,758.1 1276.0,758.3 1276.5,758.6 1277.0,758.8 1277.5,759.0 1278.0,759.3 1278.5,759.5 1279.0,759.8 1279.5,760.0 1280.0,760.2 1280.5,760.5 1281.0,760.7 1281.5,761.0 1282.0,761.2 1282.5,761.4 1283.0,761.7 1283.5,761.9 1284.0,762.1 1284.5,762.4 1285.0,762.6 1285.5,762.8 1286.0,763.1 1286.5,763.3 1287.0,763.5 1287.5,763.8 1288.0,764.0 1288.5,764.2 1289.0,764.4 1289.5,764.7 1290.0,764.9 1290.5,765.1 1291.0,765.4 1291.5,765.6 1292.0,765.8 1292.5,766.0 1293.0,766.3 1293.5,766.5 1294.0,766.7 1294.5,766.9 1295.0,767.2 1295.5,767.4 1296.0,767.6 1296.5,767.8 1297.0,768.0 1297.5,768.3 1298.0,768.5 1298.5,768.7 1299.0,768.9 1299.5,769.1 1300.0,769.3 1300.5,769.5 1301.0,769.8 1301.5,770.0 1302.0,770.2 1302.5,770.4 1303.0,770.6 1303.5,770.8 1304.0,771.0 1304.5,771.2 1305.0,771.4 1305.5,771.6 1306.0,771.9 1306.5,772.1 1307.0,772.3 1307.5,772.5 1308.0,772.7 1308.5,772.9 1309.0,773.1 1309.5,773.3 1310.0,773.5 1310.5,773.7 1311.0,773.9 1311.5,774.1 1312.0,774.3 1312.5,774.5 1313.0,774.7 1313.5,774.9 1314.0,775.1 1314.5,775.2 1315.0,775.4 1315.5,775.6 1316.0,775.8 1316.5,776.0 1317.0,776.2 1317.5,776.4 1318.0,776.6 1318.5,776.8 1319.0,777.0 1319.5,777.2 1320.0,777.4 1320.5,777.6 1321.0,777.8 1321.5,778.0 1322.0,778.2 1322.5,778.4 1323.0,778.5 1323.5,778.7 1324.0,778.9 1324.5,779.1 1325.0,779.3 1325.5,779.5 1326.0,779.7 1326.5,779.9 1327.0,780.1 1327.5,780.3 1328.0,780.5 1328.5,780.7 1329.0,780.9 1329.5,781.1 1330.0,781.3 1330.5,781.5 1331.0,781.7 1331.5,781.9 1332.0,782.0 1332.5,782.2 1333.0,782.4 1333.5,782.6 1334.0,782.8 1334.5,783.0 1335.0,783.2 1335.5,783.4 1336.0,783.6 1336.5,783.8 1337.0,784.0 1337.5,784.1 1338.0,784.3 1338.5,784.5 1339.0,784.7 1339.5,784.9 1340.0,785.1 1340.5,785.2 1341.0,785.4 1341.5,785.6 1342.0,785.8 1342.5,786.0 1343.0,786.1 1343.5,786.3 1344.0,786.5 1344.5,786.7 1345.0,786.8 1345.5,787.0 1346.0,787.2 1346.5,787.4 1347.0,787.5 1347.5,787.7 1348.0,787.9 1348.5,788.0 1349.0,788.2 1349.5,788.3 1350.0,788.5 1350.5,788.7 1351.0,788.8 1351.5,789.0 1352.0,789.1 1352.5,789.3 1353.0,789.5 1353.5,789.6 1354.0,789.8 1354.5,789.9 1355.0,790.1 1355.5,790.2 1356.0,790.4 1356.5,790.6 1357.0,790.7 1357.5,790.9 1358.0,791.0 1358.5,791.2 1359.0,791.3 1359.5,791.5 1360.0,791.6 1360.5,791.8 1361.0,791.9 1361.5,792.1 1362.0,792.3 1362.5,792.4 1363.0,792.6 1363.5,792.7 1364.0,792.9 1364.5,793.0 1365.0,793.2 1365.5,793.3 1366.0,793.5 1366.5,793.6 1367.0,793.8 1367.5,793.9 1368.0,794.1 1368.5,794.2 1369.0,794.4 1369.5,794.5 1370.0,794.7 1370.5,794.8 1371.0,795.0 1371.5,795.1 1372.0,795.3 1372.5,795.4 1373.0,795.6 1373.5,795.7 1374.0,795.9 1374.5,796.0 1375.0,796.2 1375.5,796.3 1376.0,796.5 1376.5,796.6 1377.0,796.8 1377.5,796.9 1378.0,797.0 1378.5,797.2 1379.0,797.3 1379.5,797.5 1380.0,797.6 1380.5,797.7 1381.0,797.9 1381.5,798.0 1382.0,798.1 1382.5,798.3 1383.0,798.4 1383.5,798.5 1384.0,798.7 1384.5,798.8 1385.0,798.9 1385.5,799.0 1386.0,799.2 1386.5,799.3 1387.0,799.4 1387.5,799.5 1388.0,799.7 1388.5,799.8 1389.0,799.9 1389.5,800.0 1390.0,800.1 1390.5,800.3 1391.0,800.4 1391.5,800.5 1392.0,800.6 1392.5,800.7 1393.0,800.8 1393.5,801.0 1394.0,801.1 1394.5,801.2 1395.0,801.3 1395.5,801.4 1396.0,801.5 1396.5,801.6 1397.0,801.7 1397.5,801.9 1398.0,802.0 1398.5,802.1 1399.0,802.2 1399.5,802.3 1400.0,802.4 1400.5,802.5 1401.0,802.6 1401.5,802.7 1402.0,802.8 1402.5,802.9 1403.0,803.0 1403.5,803.1 1404.0,803.2 1404.5,803.3 1405.0,803.4 1405.5,803.5 1406.0,803.6 1406.5,803.7 1407.0,803.8 1407.5,803.9 1408.0,804.0 1408.5,804.1 1409.0,804.2 1409.5,804.3 1410.0,804.4 1410.5,804.5 1411.0,804.6 1411.5,804.6 1412.0,804.7 1412.5,804.8 1413.0,804.9 1413.5,805.0 1414.0,805.1 1414.5,805.2 1415.0,805.3 1415.5,805.4 1416.0,805.4 1416.5,805.5 1417.0,805.6 1417.5,805.7 1418.0,805.8 1418.5,805.9 1419.0,805.9 1419.5,806.0 1420.0,806.1 1420.5,806.2 1421.0,806.3 1421.5,806.4 1422.0,806.4 1422.5,806.5 1423.0,806.6 1423.5,806.7 1424.0,806.8 1424.5,806.9 1425.0,806.9 1425.5,807.0 1426.0,807.1 1426.5,807.2 1427.0,807.3 1427.5,807.4 1428.0,807.4 1428.5,807.5 1429.0,807.6 1429.5,807.7 1430.0,807.8 1430.5,807.8 1431.0,807.9 1431.5,808.0 1432.0,808.1 1432.5,808.2 1433.0,808.3 1433.5,808.3 1434.0,808.4 1434.5,808.5 1435.0,808.6 1435.5,808.7 1436.0,808.8"/>
<polyline stroke="#ff4444" points="125.0,849.5 125.5,849.5 126.0,849.5 126.5,849.5 127.0,849.5 127.5,849.5 128.0,849.5 128.5,849.5 129.0,850.5 129.5,850.5 130.0,849.5 130.5,849.5 131.0,849.5 131.5,849.5 132.0,850.5 132.5,850.5 133.0,849.5 133.5,849.5 134.0,849.5 134.5,849.5 135.0,850.5 135.5,850.5 136.0,849.5 136.5,849.5 137.0,849.5 137.5,849.5 138.0,849.5 138.5,849.5 139.0,849.5 139.5,849.5 140.0,849.5 140.5,849.5 141.0,849.5 141.5,849.5 142.0,849.5 142.5,849.5 143.0,849.5 143.5,849.5 144.0,849.5 144.5,849.5 145.0,849.5 145.5,849.5 146.0,849.5 146.5,849.5 147.0,849.5 147.5,849.5 148.0,849.5 148.5,849.5 149.0,849.5 149.5,849.5 150.0,849.5 150.5,849.5 151.0,849.5 151.5,849.5 152.0,849.5 152.5,849.5 153.0,850.5 153.5,850.5 154.0,849.5 154.5,849.5 155.0,849.5 155.5,849.5 156.0,849.5 156.5,849.5 157.0,849.5 157.5,849.5 158.0,849.5 158.5,849.5 159.0,849.5 159.5,849.5 160.0,849.5 160.5,849.5 161.0,849.5 161.5,849.5 162.0,849.5 162.5,849.5 163.0,849.5 163.5,849.5 164.0,849.5 164.5,849.5 165.0,849.5 165.5,849.5 166.0,849.5 166.5,849.5 167.0,849.5 167.5,849.5 168.0,849.5 168.5,849.5 169.0,849.5 169.5,849.5 170.0,849.5 170.5,849.5 171.0,849.5 171.5,849.5 172.0,849.5 172.5,849.5 173.0,849.5 173.5,849.5 174.0,849.5 174.5,849.5 175.0,849.5 175.5,849.5 176.0,849.5 176.5,849.5 177.0,849.5 177.5,849.5 178.0,849.5 178.5,849.5 179.0,849.5 179.5,849.5 180.0,849.5 180.5,849.5 181.0,850.5 181.5,850.5 182.0,849.5 182.5,849.5 183.0,849.5 183.5,849.5 184.0,849.5 184.5,849.5 185.0,849.5 185.5,849.5 186.0,849.5 186.5,849.5 187.0,849.5 187.5,849.5 188.0,850.5 188.5,850.5 189.0,849.5 189.5,849.5 190.0,849.5 190.5,849.5 191.0,849.5 191.5,849.5 192.0,849.5 192.5,849.5 193.0,849.5 193.5,849.5 194.0,849.5 194.5,849.5 195.0,849.5 195.5,849.5 196.0,849.5 196.5,849.5 197.0,849.5 197.5,849.5 198.0,850.5 198.5,850.5 199.0,849.5 199.5,849.5 200.0,849.5 200.5,849.5 201.0,849.5 201.5,849.5 202.0,849.5 202.5,849.5 203.0,849.5 203.5,849.5 204.0,849.5 204.5,849.5 205.0,849.5 205.5,849.5 206.0,849.5 206.5,849.5 207.0,849.5 207.5,849.5 208.0,849.5 208.5,849.5 209.0,849.5 209.5,849.5 210.0,849.5 210.5,849.5 211.0,849.5 211.5,849.5 212.0,850.5 212.5,850.5 213.0,850.5 213.5,850.5 214.0,849.5 214.5,849.5 215.0,849.5 215.5,849.5 216.0,849.5 216.5,849.5 217.0,849.5 217.5,849.5 218.0,849.5 218.5,849.5 219.0,849.5 219.5,849.5 220.0,849.5 220.5,849.5 221.0,849.5 221.5,849.5 222.0,849.5 222.5,849.5 223.0,849.5 223.5,849.5 224.0,849.5 224.5,849.5 225.0,849.5 225.5,849.5 226.0,850.5 226.5,850.5 227.0,849.5 227.5,849.5 228.0,849.5 228.5,849.5 229.0,849.5 229.5,849.5 230.0,849.5 230.5,849.5 231.0,849.5 231.5,849.5 232.0,849.5 232.5,849.5 233.0,849.5 233.5,849.5 234.0,849.5 234.5,849.5 235.0,849.5 235.5,849.5 236.0,849.5 236.5,849.5 237.0,850.5 237.5,850.5 238.0,849.5 238.5,849.5 239.0,849.5 239.5,849.5 240.0,849.5 240.5,849.5 241.0,849.5 241.5,849.5 242.0,849.5 242.5,849.5 243.0,849.5 243.5,849.5 244.0,849.5 244.5,849.5 245.0,849.5 245.5,849.5 246.0,849.5 246.5,849.5 247.0,849.5 247.5,849.5 248.0,849.5 248.5,849.5 249.0,849.5 249.5,849.5 250.0,849.5 250.5,849.5 251.0,850.5 251.5,850.5 252.0,849.5 252.5,849.5 253.0,849.5 253.5,849.5 254.0,849.5 254.5,849.5 255.0,849.5 255.5,849.5 256.0,849.5 256.5,849.5 257.0,849.5 257.5,849.5 258.0,849.5 258.5,849.5 259.0,849.5 259.5,849.5 260.0,849.5 260.5,849.5 261.0,850.5 261.5,850.5 262.0,849.5 262.5,849.5 263.0,849.5 263.5,849.5 264.0,849.5 264.5,849.5 265.0,849.5 265.5,849.5 266.0,849.5 266.5,849.5 267.0,850.5 267.5,850.5 268.0,849.5 268.5,849.5 269.0,849.5 269.5,849.5 270.0,849.5 270.5,849.6 271.0,849.6 271.5,849.5 272.0,850.2 272.5,849.9 273.0,849.6 273.5,849.5 274.0,848.5 274.5,848.5 275.0,848.5 275.5,848.5 276.0,848.5 276.5,848.5 277.0,848.5 277.5,848.5 278.0,848.5 278.5,848.5 279.0,848.5 279.5,848.5 280.0,848.5 280.5,848.5 281.0,848.5 281.5,848.5 282.0,848.5 282.5,848.5 283.0,849.5 283.5,849.5 284.0,848.5 284.5,848.5 285.0,848.5 285.5,848.5 286.0,848.5 286.5,848.5 287.0,848.5 287.5,848.5 288.0,848.5 288.5,848.5 289.0,848.5 289.5,848.5 290.0,848.5 290.5,848.5 291.0,848.5 291.5,848.5 292.0,848.5 292.5,848.5 293.0,848.5 293.5,848.5 294.0,848.5 294.5,848.5 295.0,848.5 295.5,848.5 296.0,848.5 296.5,848.5 297.0,848.5 297.5,848.5 298.0,848.5 298.5,848.5 299.0,848.5 299.5,848.5 300.0,848.5 300.5,848.5 301.0,849.5 301.5,849.5 302.0,848.5 302.5,848.5 303.0,848.5 303.5,848.5 304.0,848.5 304.5,848.5 305.0,848.5 305.5,848.5 306.0,848.5 306.5,848.5 307.0,848.5 307.5,848.5 308.0,848.5 308.5,848.5 309.0,848.5 309.5,848.5 310.0,848.5 310.5,848.5 311.0,848.5 311.5,848.5 312.0,849.5 312.5,849.5 313.0,848.5 313.5,848.5 314.0,848.5 314.5,848.5 315.0,848.5 315.5,848.5 316.0,848.5 316.5,848.5 317.0,848.5 317.5,848.5 318.0,848.5 318.5,848.5 319.0,848.5 319.5,848.5 320.0,848.5 320.5,848.5 321.0,848.5 321.5,848.5 322.0,848.6 322.5,848.7 323.0,849.0 323.5,849.2 324.0,849.4 324.5,849.5 325.0,849.6 325.5,849.6 326.0,849.5 326.5,849.5 327.0,849.5 327.5,849.5 328.0,849.5 328.5,849.5 329.0,849.5 329.5,849.5 330.0,849.5 330.5,849.5 331.0,849.5 331.5,849.5 332.0,849.5 332.5,849.5 333.0,849.5 333.5,849.5 334.0,849.5 334.5,849.5 335.0,849.5 335.5,849.5 336.0,849.5 336.5,849.5 337.0,849.5 337.5,849.5 338.0,849.5 338.5,849.5 339.0,849.5 339.5,849.5 340.0,849.5 340.5,849.5 341.0,849.5 341.5,849.5 342.0,849.5 342.5,849.5 343.0,849.5 343.5,849.5 344.0,849.5 344.5,849.5 345.0,849.5 345.5,849.5 346.0,849.5 346.5,849.5 347.0,849.5 347.5,849.5 348.0,849.5 348.5,849.5 349.0,849.5 349.5,849.5 350.0,849.5 350.5,849.5 351.0,849.5 351.5,849.5 352.0,849.5 352.5,849.5 353.0,849.5 353.5,849.5 354.0,849.5 354.5,849.5 355.0,849.5 355.5,849.5 356.0,849.5 356.5,849.5 357.0,849.5 357.5,849.5 358.0,849.5 358.5,849.5 359.0,849.5 359.5,849.5 360.0,849.5 360.5,849.5 361.0,849.5 361.5,849.5 362.0,849.5 362.5,849.5 363.0,850.5 363.5,850.5 364.0,850.5 364.5,850.5 365.0,849.5 365.5,849.5 366.0,849.5 366.5,849.5 367.0,849.5 367.5,849.5 368.0,849.5 368.5,849.5 369.0,849.5 369.5,849.5 370.0,849.5 370.5,849.5 371.0,849.5 371.5,849.5 372.0,849.5 372.5,849.5 373.0,849.5 373.5,849.5 374.0,849.5 374.5,849.5 375.0,849.5 375.5,849.5 376.0,849.5 376.5,849.5 377.0,849.5 377.5,849.5 378.0,849.5 378.5,849.5 379.0,849.5 379.5,849.5 380.0,849.5 380.5,849.5 381.0,849.5 381.5,849.5 382.0,849.5 382.5,849.5 383.0,849.5 383.5,849.5 384.0,849.5 384.5,849.5 385.0,849.5 385.5,849.5 386.0,849.5 386.5,849.5 387.0,849.5 387.5,849.5 388.0,849.5 388.5,849.5 389.0,849.5 389.5,849.5 390.0,849.5 390.5,849.5 391.0,849.5 391.5,849.5 392.0,849.5 392.5,849.5 393.0,850.5 393.5,850.5 394.0,849.5 394.5,849.5 395.0,849.5 395.5,849.5 396.0,849.5 396.5,849.5 397.0,850.5 397.5,850.5 398.0,849.5 398.5,849.5 399.0,850.5 399.5,850.5 400.0,850.5 400.5,850.5 401.0,849.5 401.5,849.5 402.0,849.5 402.5,849.5 403.0,849.5 403.5,849.5 404.0,849.5 404.5,849.5 405.0,850.5 405.5,850.5 406.0,849.5 406.5,849.5 407.0,849.5 407.5,849.5 408.0,849.5 408.5,849.5 409.0,849.5 409.5,849.5 410.0,849.5 410.5,849.5 411.0,849.5 411.5,849.5 412.0,849.5 412.5,849.5 413.0,849.5 413.5,849.5 414.0,849.5 414.5,849.5 415.0,849.5 415.5,849.5 416.0,849.5 416.5,849.5 417.0,849.5 417.5,849.5 418.0,849.5 418.5,849.5 419.0,849.5 419.5,849.5 420.0,849.5 420.5,849.5 421.0,849.5 421.5,849.5 422.0,849.5 422.5,849.5 423.0,849.5 423.5,849.5 424.0,850.5 424.5,850.5 425.0,849.5 425.5,849.5 426.0,849.5 426.5,849.5 427.0,849.5 427.5,849.5 428.0,849.5 428.5,849.5 429.0,849.5 429.5,849.5 430.0,849.5 430.5,849.5 431.0,849.5 431.5,849.5 432.0,849.5 432.5,849.5 433.0,849.5 433.5,849.5 434.0,849.5 434.5,849.5 435.0,849.5 435.5,849.5 436.0,849.5 436.5,849.5 437.0,850.5 437.5,850.5 438.0,849.5 438.5,849.5 439.0,850.5 439.5,850.5 440.0,849.5 440.5,849.5 441.0,849.5 441.5,849.5 442.0,849.5 442.5,849.5 443.0,849.5 443.5,849.5 444.0,849.5 444.5,849.5 445.0,850.5 445.5,850.5 446.0,850.5 446.5,850.5 447.0,849.5 447.5,849.5 448.0,849.5 448.5,849.5 449.0,849.5 449.5,849.5 450.0,849.5 450.5,849.5 451.0,849.5 451.5,849.5 452.0,849.5 452.5,849.5 453.0,849.5 453.5,849.5 454.0,850.5 454.5,850.5 455.0,849.5 455.5,849.5 456.0,849.5 456.5,849.5 457.0,849.5 457.5,849.5 458.0,850.5 458.5,850.5 459.0,849.5 459.5,849.5 460.0,849.5 460.5,849.5 461.0,849.5 461.5,849.5 462.0,849.5 462.5,849.5 463.0,849.5 463.5,849.5 464.0,849.5 464.5,849.5 465.0,849.5 465.5,849.5 466.0,849.5 466.5,849.5 467.0,849.5 467.5,849.5 468.0,849.5 468.5,849.5 469.0,849.5 469.5,849.5 470.0,849.5 470.5,849.5 471.0,849.5 471.5,849.5 472.0,849.5 472.5,849.5 473.0,849.5 473.5,849.5 474.0,849.5 474.5,849.5 475.0,849.5 475.5,849.5 476.0,849.5 476.5,849.5 477.0,849.5 477.5,849.5 478.0,849.5 478.5,849.5 479.0,849.5 479.5,849.5 480.0,850.5 480.5,850.5 481.0,849.5 481.5,849.5 482.0,849.5 482.5,849.5 483.0,849.5 483.5,849.5 484.0,849.5 484.5,849.5 485.0,849.5 485.5,849.5 486.0,849.5 486.5,849.5 487.0,849.5 487.5,849.5 488.0,849.5 488.5,849.5 489.0,849.5 489.5,849.5 490.0,849.5 490.5,849.5 491.0,849.5 491.5,849.5 492.0,849.5 492.5,849.5 493.0,849.5 493.5,849.5 494.0,849.5 494.5,849.5 495.0,849.5 495.5,849.5 496.0,849.5 496.5,849.5 497.0,849.5 497.5,849.5 498.0,849.5 498.5,849.5 499.0,849.5 499.5,849.5 500.0,849.5 500.5,849.5 501.0,849.5 501.5,849.5 502.0,849.5 502.5,849.5 503.0,849.5 503.5,849.5 504.0,850.5 504.5,850.5 505.0,849.5 505.5,849.5 506.0,849.5 506.5,849.5 507.0,849.5 507.5,849.5 508.0,849.5 508.5,849.5 509.0,849.5 509.5,849.5 510.0,849.5 510.5,849.5 511.0,849.5 511.5,849.5 512.0,849.5 512.5,849.5 513.0,849.5 513.5,849.5 514.0,849.5 514.5,849.5 515.0,849.5 515.5,849.5 516.0,849.5 516.5,849.5 517.0,849.5 517.5,849.5 518.0,849.5 518.5,849.5 519.0,849.5 519.5,849.5 520.0,849.5 520.5,849.5 521.0,849.5 521.5,849.5 522.0,850.5 522.5,850.5 523.0,849.5 523.5,849.5 524.0,849.5 524.5,849.5 525.0,849.5 525.5,849.5 526.0,850.5 526.5,850.5 527.0,849.5 527.5,849.5 528.0,850.5 528.5,850.5 529.0,849.5 529.5,849.5 530.0,849.5 530.5,849.5 531.0,849.5 531.5,849.5 532.0,849.5 532.5,849.5 533.0,850.5 533.5,850.5 534.0,849.5 534.5,849.5 535.0,849.5 535.5,849.5 536.0,849.5 536.5,849.5 537.0,849.5 537.5,849.5 538.0,849.5 538.5,849.5 539.0,849.5 539.5,849.5 540.0,849.5 540.5,849.5 541.0,849.5 541.5,849.5 542.0,849.5 542.5,849.5 543.0,849.5 543.5,849.5 544.0,849.5 544.5,849.5 545.0,849.5 545.5,849.5 546.0,849.5 546.5,849.5 547.0,850.5 547.5,850.5 548.0,849.5 548.5,849.5 549.0,850.5 549.5,850.5 550.0,849.5 550.5,849.5 551.0,849.5 551.5,849.5 552.0,849.5 552.5,849.5 553.0,849.5 553.5,849.5 554.0,849.5 554.5,849.5 555.0,849.5 555.5,849.5 556.0,849.5 556.5,849.5 557.0,849.5 557.5,849.5 558.0,849.5 558.5,849.5 559.0,849.5 559.5,849.5 560.0,849.5 560.5,849.5 561.0,849.5 561.5,849.5 562.0,849.5 562.5,849.5 563.0,849.5 563.5,849.5 564.0,849.5 564.5,849.5 565.0,849.5 565.5,849.5 566.0,849.5 566.5,849.5 567.0,849.5 567.5,849.5 568.0,849.5 568.5,849.5 569.0,849.5 569.5,849.5 570.0,849.5 570.5,849.5 571.0,849.5 571.5,849.5 572.0,849.5 572.5,849.5 573.0,849.5 573.5,849.5 574.0,849.5 574.5,849.5 575.0,849.5 575.5,849.5 576.0,850.5 576.5,850.5 577.0,849.5 577.5,849.5 578.0,849.5 578.5,849.5 579.0,849.5 579.5,849.5 580.0,849.5 580.5,849.5 581.0,849.5 581.5,849.5 582.0,849.5 582.5,849.5 583.0,849.5 583.5,849.5 584.0,849.5 584.5,849.5 585.0,849.5 585.5,849.5 586.0,849.5 586.5,849.5 587.0,849.5 587.5,849.5 588.0,849.5 588.5,849.5 589.0,849.5 589.5,849.5 590.0,849.5 590.5,849.5 591.0,849.5 591.5,849.5 592.0,849.6 592.5,849.5 593.0,849.2 593.5,848.7 594.0,848.0 594.5,847.2 595.0,846.4 595.5,845.5 596.0,844.6 596.5,843.7 597.0,842.9 597.5,842.0 598.0,841.1 598.5,840.2 599.0,839.2 599.5,838.1 600.0,837.1 600.5,836.0 601.0,834.8 601.5,833.7 602.0,832.6 602.5,831.4 603.0,830.2 603.5,829.1 604.0,827.9 604.5,826.8 605.0,825.6 605.5,824.5 606.0,823.3 606.5,822.2 607.0,821.0 607.5,819.8 608.0,818.6 608.5,817.4 609.0,816.2 609.5,815.0 610.0,813.8 610.5,812.5 611.0,811.3 611.5,810.1 612.0,808.8 612.5,807.6 613.0,806.3 613.5,805.1 614.0,803.8 614.5,802.6 615.0,801.3 615.5,800.1 616.0,798.8 616.5,797.6 617.0,796.3 617.5,795.1 618.0,793.8 618.5,792.6 619.0,791.3 619.5,790.1 620.0,788.8 620.5,787.6 621.0,786.4 621.5,785.1 622.0,783.9 622.5,782.7 623.0,781.5 623.5,780.3 624.0,779.1 624.5,777.9 625.0,776.7 625.5,775.6 626.0,774.4 626.5,773.3 627.0,772.1 627.5,771.0 628.0,769.8 628.5,768.7 629.0,767.6 629.5,766.4 630.0,765.3 630.5,764.1 631.0,763.0 631.5,761.8 632.0,760.6 632.5,759.4 633.0,758.2 633.5,757.0 634.0,755.8 634.5,754.6 635.0,753.3 635.5,752.0 636.0,750.7 636.5,749.4 637.0,748.1 637.5,746.7 638.0,745.2 638.5,743.7 639.0,742.2 639.5,740.6 640.0,739.0 640.5,737.4 641.0,735.8 641.5,734.3 642.0,732.7 642.5,731.2 643.0,729.7 643.5,728.3 644.0,727.0 644.5,725.7 645.0,724.4 645.5,723.1 646.0,721.9 646.5,720.7 647.0,719.6 647.5,718.4 648.0,717.3 648.5,716.1 649.0,715.0 649.5,713.9 650.0,712.9 650.5,711.8 651.0,710.7 651.5,709.7 652.0,708.6 652.5,707.6 653.0,706.6 653.5,705.5 654.0,704.5 654.5,703.5 655.0,702.4 655.5,701.4 656.0,700.4 656.5,699.3 657.0,698.3 657.5,697.2 658.0,696.2 658.5,695.1 659.0,694.0 659.5,692.9 660.0,691.8 660.5,690.6 661.0,689.5 661.5,688.3 662.0,687.1 662.5,685.9 663.0,684.6 663.5,683.3 664.0,682.0 664.5,680.5 665.0,679.1 665.5,677.7 666.0,676.3 666.5,675.0 667.0,673.7 667.5,672.6 668.0,671.4 668.5,670.3 669.0,669.2 669.5,668.1 670.0,667.0 670.5,666.0 671.0,664.9 671.5,663.9 672.0,662.9 672.5,661.9 673.0,660.9 673.5,659.9 674.0,658.9 674.5,657.9 675.0,657.0 675.5,656.0 676.0,655.1 676.5,654.2 677.0,653.2 677.5,652.3 678.0,651.4 678.5,650.5 679.0,649.6 679.5,648.8 680.0,647.9 680.5,647.0 681.0,646.1 681.5,645.3 682.0,644.4 682.5,643.6 683.0,642.7 683.5,641.9 684.0,641.0 684.5,640.2 685.0,639.3 685.5,638.5 686.0,637.6 686.5,636.8 687.0,636.0 687.5,635.2 688.0,634.4 688.5,633.6 689.0,632.8 689.5,632.1 690.0,631.3 690.5,630.6 691.0,629.8 691.5,629.1 692.0,628.3 692.5,627.6 693.0,626.9 693.5,626.2 694.0,625.4 694.5,624.7 695.0,624.0 695.5,623.2 696.0,622.5 696.5,621.8 697.0,621.0 697.5,620.3 698.0,619.5 698.5,618.7 699.0,618.0 699.5,617.2 700.0,616.4 700.5,615.5 701.0,614.7 701.5,613.8 702.0,612.9 702.5,612.0 703.0,611.0 703.5,610.1 704.0,609.1 704.5,608.1 705.0,607.1 705.5,606.1 706.0,605.1 706.5,604.1 707.0,603.1 707.5,602.1 708.0,601.1 708.5,600.1 709.0,599.1 709.5,598.2 710.0,597.3 710.5,596.3 711.0,595.4 711.5,594.5 712.0,593.7 712.5,592.8 713.0,591.9 713.5,591.1 714.0,590.3 714.5,589.4 715.0,588.6 715.5,587.7 716.0,586.9 716.5,586.1 717.0,585.2 717.5,584.3 718.0,583.4 718.5,582.6 719.0,581.7 719.5,580.8 720.0,579.9 720.5,579.1 721.0,578.2 721.5,577.4 722.0,576.6 722.5,575.8 723.0,575.0 723.5,574.2 724.0,573.4 724.5,572.6 725.0,571.9 725.5,571.1 726.0,570.4 726.5,569.7 727.0,568.9 727.5,568.2 728.0,567.4 728.5,566.7 729.0,566.0 729.5,565.2 730.0,564.5 730.5,563.8 731.0,563.0 731.5,562.4 732.0,561.7 732.5,561.0 733.0,560.4 733.5,559.8 734.0,559.2 734.5,558.7 735.0,558.2 735.5,557.7 736.0,557.2 736.5,556.8 737.0,556.4 737.5,555.9 738.0,555.5 738.5,555.0 739.0,554.5 739.5,554.1 740.0,553.5 740.5,553.0 741.0,552.4 741.5,551.7 742.0,551.0 742.5,550.3 743.0,549.6 743.5,548.8 744.0,548.0 744.5,547.2 745.0,546.4 745.5,545.6 746.0,544.7 746.5,543.9 747.0,543.1 747.5,542.3 748.0,541.6 748.5,540.8 749.0,540.1 749.5,539.4 750.0,538.7 750.5,538.1 751.0,537.4 751.5,536.8 752.0,536.1 752.5,535.5 753.0,534.8 753.5,534.2 754.0,533.5 754.5,532.9 755.0,532.2 755.5,531.5 756.0,530.8 756.5,530.1 757.0,529.5 757.5,528.8 758.0,528.2 758.5,527.5 759.0,526.9 759.5,526.4 760.0,525.8 760.5,525.3 761.0,524.8 761.5,524.4 762.0,523.9 762.5,523.5 763.0,523.0 763.5,522.6 764.0,522.1 764.5,521.6 765.0,521.1 765.5,520.6 766.0,520.1 766.5,519.5 767.0,518.9 767.5,518.2 768.0,517.6 768.5,516.9 769.0,516.1 769.5,515.4 770.0,514.7 770.5,514.0 771.0,513.3 771.5,512.6 772.0,511.9 772.5,511.3 773.0,510.7 773.5,510.2 774.0,509.7 774.5,509.2 775.0,508.8 775.5,508.4 776.0,508.0 776.5,507.6 777.0,507.3 777.5,507.0 778.0,506.6 778.5,506.3 779.0,505.9 779.5,505.5 780.0,505.1 780.5,504.7 781.0,504.3 781.5,503.8 782.0,503.3 782.5,502.8 783.0,502.3 783.5,501.8 784.0,501.2 784.5,500.7 785.0,500.2 785.5,499.6 786.0,499.1 786.5,498.6 787.0,498.1 787.5,497.6 788.0,497.1 788.5,496.6 789.0,496.1 789.5,495.6 790.0,495.1 790.5,494.5 791.0,494.0 791.5,493.4 792.0,492.7 792.5,492.1 793.0,491.4 793.5,490.7 794.0,490.0 794.5,489.3 795.0,488.6 795.5,487.9 796.0,487.2 796.5,486.5 797.0,485.8 797.5,485.2 798.0,484.6 798.5,484.0 799.0,483.5 799.5,483.1 800.0,482.7 800.5,482.3 801.0,482.0 801.5,481.8 802.0,481.5 802.5,481.3 803.0,481.0 803.5,480.8 804.0,480.6 804.5,480.4 805.0,480.1 805.5,479.8 806.0,479.5 806.5,479.2 807.0,478.8 807.5,478.4 808.0,478.0 808.5,477.6 809.0,477.1 809.5,476.6 810.0,476.1 810.5,475.6 811.0,475.1 811.5,474.6 812.0,474.1 812.5,473.6 813.0,473.2 813.5,472.7 814.0,472.2 814.5,471.8 815.0,471.3 815.5,470.9 816.0,470.4 816.5,469.9 817.0,469.4 817.5,468.9 818.0,468.4 818.5,467.8 819.0,467.2 819.5,466.6 820.0,466.0 820.5,465.4 821.0,464.8 821.5,464.2 822.0,463.6 822.5,463.0 823.0,462.4 823.5,461.9 824.0,461.4 824.5,460.9 825.0,460.4 825.5,460.0 826.0,459.7 826.5,459.4 827.0,459.1 827.5,458.8 828.0,458.5 828.5,458.2 829.0,458.0 829.5,457.7 830.0,457.4 830.5,457.1 831.0,456.7 831.5,456.4 832.0,455.9 832.5,455.5 833.0,455.0 833.5,454.5 834.0,454.0 834.5,453.4 835.0,452.8 835.5,452.3 836.0,451.7 836.5,451.1 837.0,450.6 837.5,450.1 838.0,449.6 838.5,449.1 839.0,448.7 839.5,448.3 840.0,447.9 840.5,447.6 841.0,447.2 841.5,446.9 842.0,446.6 842.5,446.4 843.0,446.1 843.5,445.8 844.0,445.6 844.5,445.3 845.0,445.0 845.5,444.7 846.0,444.4 846.5,444.1 847.0,443.8 847.5,443.5 848.0,443.2 848.5,442.9 849.0,442.7 849.5,442.4 850.0,442.2 850.5,442.0 851.0,441.8 851.5,441.7 852.0,441.5 852.5,441.4 853.0,441.3 853.5,441.2 854.0,441.1 854.5,440.9 855.0,440.8 855.5,440.6 856.0,440.4 856.5,440.1 857.0,439.8 857.5,439.4 858.0,439.1 858.5,438.6 859.0,438.1 859.5,437.6 860.0,437.1 860.5,436.5 861.0,436.0 861.5,435.4 862.0,434.8 862.5,434.3 863.0,433.7 863.5,433.2 864.0,432.7 864.5,432.3 865.0,431.9 865.5,431.5 866.0,431.2 866.5,430.9 867.0,430.6 867.5,430.4 868.0,430.1 868.5,429.9 869.0,429.7 869.5,429.5 870.0,429.3 870.5,429.1 871.0,428.8 871.5,428.6 872.0,428.3 872.5,428.1 873.0,427.8 873.5,427.5 874.0,427.2 874.5,427.0 875.0,426.7 875.5,426.5 876.0,426.2 876.5,426.0 877.0,425.8 877.5,425.6 878.0,425.4 878.5,425.2 879.0,425.1 879.5,424.9 880.0,424.7 880.5,424.6 881.0,424.4 881.5,424.1 882.0,423.9 882.5,423.6 883.0,423.3 883.5,422.9 884.0,422.5 884.5,422.1 885.0,421.7 885.5,421.2 886.0,420.7 886.5,420.2 887.0,419.7 887.5,419.2 888.0,418.7 888.5,418.2 889.0,417.8 889.5,417.4 890.0,417.0 890.5,416.7 891.0,416.4 891.5,416.2 892.0,415.9 892.5,415.8 893.0,415.6 893.5,415.4 894.0,415.3 894.5,415.1 895.0,415.0 895.5,414.8 896.0,414.6 896.5,414.4 897.0,414.2 897.5,413.9 898.0,413.6 898.5,413.3 899.0,412.9 899.5,412.6 900.0,412.2 900.5,411.8 901.0,411.4 901.5,411.1 902.0,410.7 902.5,410.3 903.0,410.0 903.5,409.6 904.0,409.3 904.5,409.0 905.0,408.7 905.5,408.4 906.0,408.1 906.5,407.9 907.0,407.6 907.5,407.3 908.0,407.0 908.5,406.7 909.0,406.4 909.5,406.1 910.0,405.7 910.5,405.4 911.0,405.0 911.5,404.7 912.0,404.3 912.5,404.0 913.0,403.7 913.5,403.4 914.0,403.1 914.5,402.9 915.0,402.7 915.5,402.5 916.0,402.4 916.5,402.4 917.0,402.4 917.5,402.5 918.0,402.5 918.5,402.6 919.0,402.7 919.5,402.8 920.0,402.8 920.5,402.8 921.0,402.8 921.5,402.8 922.0,402.8 922.5,402.8 923.0,402.7 923.5,402.5 924.0,402.4 924.5,402.1 925.0,401.9 925.5,401.6 926.0,401.2 926.5,400.9 927.0,400.5 927.5,400.2 928.0,399.8 928.5,399.4 929.0,399.1 929.5,398.7 930.0,398.4 930.5,398.1 931.0,397.8 931.5,397.5 932.0,397.2 932.5,396.9 933.0,396.6 933.5,396.4 934.0,396.1 934.5,395.8 935.0,395.4 935.5,395.1 936.0,394.8 936.5,394.4 937.0,394.1 937.5,393.7 938.0,393.4 938.5,393.0 939.0,392.7 939.5,392.3 940.0,392.0 940.5,391.8 941.0,391.5 941.5,391.3 942.0,391.1 942.5,391.0 943.0,390.9 943.5,390.8 944.0,390.7 944.5,390.7 945.0,390.6 945.5,390.6 946.0,390.5 946.5,390.5 947.0,390.4 947.5,390.3 948.0,390.1 948.5,390.0 949.0,389.8 949.5,389.5 950.0,389.3 950.5,389.0 951.0,388.7 951.5,388.4 952.0,388.0 952.5,387.7 953.0,387.4 953.5,387.1 954.0,386.8 954.5,386.5 955.0,386.3 955.5,386.1 956.0,385.9 956.5,385.8 957.0,385.7 957.5,385.6 958.0,385.6 958.5,385.5 959.0,385.5 959.5,385.5 960.0,385.5 960.5,385.4 961.0,385.4 961.5,385.3 962.0,385.3 962.5,385.2 963.0,385.0 963.5,384.8 964.0,384.5 964.5,384.3 965.0,384.0 965.5,383.7 966.0,383.4 966.5,383.1 967.0,382.8 967.5,382.6 968.0,382.4 968.5,382.2 969.0,382.1 969.5,382.1 970.0,382.1 970.5,382.2 971.0,382.2 971.5,382.2 972.0,382.2 972.5,382.2 973.0,382.1 973.5,381.9 974.0,381.7 974.5,381.5 975.0,381.3 975.5,381.1 976.0,381.0 976.5,381.0 977.0,381.3 977.5,381.7 978.0,382.1 978.5,382.6 979.0,383.1 979.5,383.6 980.0,384.1 980.5,384.6 981.0,385.2 981.5,385.9 982.0,386.7 982.5,387.7 983.0,388.7 983.5,389.8 984.0,390.9 984.5,392.0 985.0,393.2 985.5,394.3 986.0,395.5 986.5,396.6 987.0,397.6 987.5,398.7 988.0,399.8 988.5,400.8 989.0,401.9 989.5,403.0 990.0,404.1 990.5,405.3 991.0,406.4 991.5,407.5 992.0,408.6 992.5,409.8 993.0,410.9 993.5,412.1 994.0,413.2 994.5,414.4 995.0,415.6 995.5,416.7 996.0,417.9 996.5,419.1 997.0,420.2 997.5,421.4 998.0,422.6 998.5,423.8 999.0,425.0 999.5,426.1 1000.0,427.3 1000.5,428.5 1001.0,429.7 1001.5,430.8 1002.0,432.0 1002.5,433.2 1003.0,434.3 1003.5,435.5 1004.0,436.6 1004.5,437.8 1005.0,439.0 1005.5,440.1 1006.0,441.3 1006.5,442.4 1007.0,443.6 1007.5,444.7 1008.0,445.9 1008.5,447.1 1009.0,448.2 1009.5,449.4 1010.0,450.6 1010.5,451.7 1011.0,452.9 1011.5,454.1 1012.0,455.3 1012.5,456.4 1013.0,457.6 1013.5,458.8 1014.0,459.9 1014.5,461.1 1015.0,462.2 1015.5,463.4 1016.0,464.6 1016.5,465.7 1017.0,466.9 1017.5,468.0 1018.0,469.2 1018.5,470.3 1019.0,471.4 1019.5,472.6 1020.0,473.7 1020.5,474.8 1021.0,475.9 1021.5,477.1 1022.0,478.2 1022.5,479.3 1023.0,480.4 1023.5,481.5 1024.0,482.6 1024.5,483.7 1025.0,484.7 1025.5,485.8 1026.0,486.9 1026.5,488.0 1027.0,489.1 1027.5,490.2 1028.0,491.3 1028.5,492.3 1029.0,493.4 1029.5,494.5 1030.0,495.5 1030.5,496.6 1031.0,497.7 1031.5,498.7 1032.0,499.8 1032.5,500.8 1033.0,501.9 1033.5,502.9 1034.0,504.0 1034.5,505.0 1035.0,506.0 1035.5,507.1 1036.0,508.1 1036.5,509.1 1037.0,510.2 1037.5,511.2 1038.0,512.2 1038.5,513.2 1039.0,514.2 1039.5,515.2 1040.0,516.2 1040.5,517.2 1041.0,518.2 1041.5,519.2 1042.0,520.2 1042.5,521.1 1043.0,522.1 1043.5,523.1 1044.0,524.1 1044.5,525.0 1045.0,526.0 1045.5,527.0 1046.0,527.9 1046.5,528.9 1047.0,529.8 1047.5,530.8 1048.0,531.7 1048.5,532.7 1049.0,533.6 1049.5,534.5 1050.0,535.5 1050.5,536.4 1051.0,537.3 1051.5,538.3 1052.0,539.2 1052.5,540.1 1053.0,541.0 1053.5,541.9 1054.0,542.9 1054.5,543.8 1055.0,544.7 1055.5,545.6 1056.0,546.5 1056.5,547.4 1057.0,548.3 1057.5,549.2 1058.0,550.1 1058.5,550.9 1059.0,551.8 1059.5,552.7 1060.0,553.6 1060.5,554.5 1061.0,555.4 1061.5,556.3 1062.0,557.1 1062.5,558.0 1063.0,558.9 1063.5,559.8 1064.0,560.6 1064.5,561.5 1065.0,562.4 1065.5,563.2 1066.0,564.1 1066.5,565.0 1067.0,565.8 1067.5,566.7 1068.0,567.6 1068.5,568.4 1069.0,569.3 1069.5,570.1 1070.0,570.9 1070.5,571.8 1071.0,572.6 1071.5,573.5 1072.0,574.3 1072.5,575.1 1073.0,575.9 1073.5,576.8 1074.0,577.6 1074.5,578.4 1075.0,579.2 1075.5,580.0 1076.0,580.8 1076.5,581.6 1077.0,582.4 1077.5,583.2 1078.0,584.0 1078.5,584.8 1079.0,585.5 1079.5,586.3 1080.0,587.1 1080.5,587.8 1081.0,588.6 1081.5,589.4 1082.0,590.1 1082.5,590.9 1083.0,591.6 1083.5,592.3 1084.0,593.1 1084.5,593.8 1085.0,594.5 1085.5,595.3 1086.0,596.0 1086.5,596.7 1087.0,597.5 1087.5,598.2 1088.0,598.9 1088.5,599.6 1089.0,600.3 1089.5,601.0 1090.0,601.7 1090.5,602.4 1091.0,603.1 1091.5,603.8 1092.0,604.5 1092.5,605.2 1093.0,605.9 1093.5,606.6 1094.0,607.3 1094.5,607.9 1095.0,608.6 1095.5,609.3 1096.0,610.0 1096.5,610.6 1097.0,611.3 1097.5,612.0 1098.0,612.6 1098.5,613.3 1099.0,614.0 1099.5,614.6 1100.0,615.3 1100.5,615.9 1101.0,616.6 1101.5,617.2 1102.0,617.9 1102.5,618.5 1103.0,619.1 1103.5,619.8 1104.0,620.4 1104.5,621.0 1105.0,621.7 1105.5,622.3 1106.0,622.9 1106.5,623.5 1107.0,624.2 1107.5,624.8 1108.0,625.4 1108.5,626.0 1109.0,626.6 1109.5,627.2 1110.0,627.8 1110.5,628.4 1111.0,629.0 1111.5,629.6 1112.0,630.2 1112.5,630.8 1113.0,631.4 1113.5,632.0 1114.0,632.6 1114.5,633.2 1115.0,633.8 1115.5,634.4 1116.0,634.9 1116.5,635.5 1117.0,636.1 1117.5,636.6 1118.0,637.2 1118.5,637.8 1119.0,638.3 1119.5,638.9 1120.0,639.5 1120.5,640.0 1121.0,640.6 1121.5,641.1 1122.0,641.7 1122.5,642.2 1123.0,642.8 1123.5,643.3 1124.0,643.9 1124.5,644.4 1125.0,645.0 1125.5,645.5 1126.0,646.0 1126.5,646.6 1127.0,647.1 1127.5,647.6 1128.0,648.2 1128.5,648.7 1129.0,649.2 1129.5,649.7 1130.0,650.2 1130.5,650.7 1131.0,651.2 1131.5,651.7 1132.0,652.2 1132.5,652.7 1133.0,653.2 1133.5,653.7 1134.0,654.1 1134.5,654.6 1135.0,655.1 1135.5,655.6 1136.0,656.1 1136.5,656.6 1137.0,657.1 1137.5,657.6 1138.0,658.1 1138.5,658.6 1139.0,659.1 1139.5,659.6 1140.0,660.1 1140.5,660.6 1141.0,661.1 1141.5,661.6 1142.0,662.1 1142.5,662.7 1143.0,663.2 1143.5,663.7 1144.0,664.3 1144.5,664.8 1145.0,665.4 1145.5,665.9 1146.0,666.5 1146.5,667.0 1147.0,667.6 1147.5,668.1 1148.0,668.7 1148.5,669.2 1149.0,669.8 1149.5,670.4 1150.0,670.9 1150.5,671.5 1151.0,672.0 1151.5,672.5 1152.0,673.1 1152.5,673.6 1153.0,674.1 1153.5,674.7 1154.0,675.2 1154.5,675.7 1155.0,676.2 1155.5,676.7 1156.0,677.2 1156.5,677.7 1157.0,678.2 1157.5,678.6 1158.0,679.1 1158.5,679.6 1159.0,680.1 1159.5,680.5 1160.0,681.0 1160.5,681.5 1161.0,682.0 1161.5,682.4 1162.0,682.9 1162.5,683.3 1163.0,683.8 1163.5,684.3 1164.0,684.7 1164.5,685.2 1165.0,685.6 1165.5,686.1 1166.0,686.5 1166.5,686.9 1167.0,687.4 1167.5,687.8 1168.0,688.3 1168.5,688.7 1169.0,689.2 1169.5,689.6 1170.0,690.0 1170.5,690.5 1171.0,690.9 1171.5,691.3 1172.0,691.8 1172.5,692.2 1173.0,692.6 1173.5,693.0 1174.0,693.5 1174.5,693.9 1175.0,694.3 1175.5,694.7 1176.0,695.2 1176.5,695.6 1177.0,696.0 1177.5,696.4 1178.0,696.9 1178.5,697.3 1179.0,697.7 1179.5,698.1 1180.0,698.5 1180.5,698.9 1181.0,699.3 1181.5,699.7 1182.0,700.1 1182.5,700.5 1183.0,700.9 1183.5,701.4 1184.0,701.8 1184.5,702.2 1185.0,702.6 1185.5,702.9 1186.0,703.3 1186.5,703.7 1187.0,704.1 1187.5,704.5 1188.0,704.9 1188.5,705.3 1189.0,705.7 1189.5,706.1 1190.0,706.5 1190.5,706.9 1191.0,707.3 1191.5,707.7 1192.0,708.1 1192.5,708.4 1193.0,708.8 1193.5,709.2 1194.0,709.6 1194.5,710.0 1195.0,710.4 1195.5,710.8 1196.0,711.2 1196.5,711.5 1197.0,711.9 1197.5,712.3 1198.0,712.7 1198.5,713.1 1199.0,713.5 1199.5,713.9 1200.0,714.3 1200.5,714.6 1201.0,715.0 1201.5,715.4 1202.0,715.8 1202.5,716.2 1203.0,716.6 1203.5,717.0 1204.0,717.3 1204.5,717.7 1205.0,718.1 1205.5,718.5 1206.0,718.9 1206.5,719.3 1207.0,719.6 1207.5,720.0 1208.0,720.4 1208.5,720.8 1209.0,721.1 1209.5,721.5 1210.0,721.9 1210.5,722.3 1211.0,722.6 1211.5,723.0 1212.0,723.4 1212.5,723.7 1213.0,724.1 1213.5,724.5 1214.0,724.8 1214.5,725.2 1215.0,725.6 1215.5,725.9 1216.0,726.3 1216.5,726.6 1217.0,727.0 1217.5,727.3 1218.0,727.7 1218.5,728.0 1219.0,728.4 1219.5,728.7 1220.0,729.1 1220.5,729.4 1221.0,729.7 1221.5,730.1 1222.0,730.4 1222.5,730.7 1223.0,731.1 1223.5,731.4 1224.0,731.7 1224.5,732.1 1225.0,732.4 1225.5,732.7 1226.0,733.1 1226.5,733.4 1227.0,733.7 1227.5,734.0 1228.0,734.4 1228.5,734.7 1229.0,735.0 1229.5,735.3 1230.0,735.6 1230.5,736.0 1231.0,736.3 1231.5,736.6 1232.0,736.9 1232.5,737.2 1233.0,737.6 1233.5,737.9 1234.0,738.2 1234.5,738.5 1235.0,738.8 1235.5,739.1 1236.0,739.4 1236.5,739.8 1237.0,740.1 1237.5,740.4 1238.0,740.7 1238.5,741.0 1239.0,741.3 1239.5,741.6 1240.0,741.9 1240.5,742.2 1241.0,742.6 1241.5,742.9 1242.0,743.2 1242.5,743.5 1243.0,743.8 1243.5,744.1 1244.0,744.4 1244.5,744.7 1245.0,745.0 1245.5,745.3 1246.0,745.7 1246.5,746.0 1247.0,746.3 1247.5,746.6 1248.0,746.9 1248.5,747.2 1249.0,747.5 1249.5,747.8 1250.0,748.1 1250.5,748.4 1251.0,748.7 1251.5,749.0 1252.0,749.3 1252.5,749.6 1253.0,749.9 1253.5,750.2 1254.0,750.5 1254.5,750.7 1255.0,751.0 1255.5,751.3 1256.0,751.6 1256.5,751.9 1257.0,752.2 1257.5,752.5 1258.0,752.7 1258.5,753.0 1259.0,753.3 1259.5,753.6 1260.0,753.8 1260.5,754.1 1261.0,754.4 1261.5,754.6 1262.0,754.9 1262.5,755.2 1263.0,755.4 1263.5,755.7 1264.0,755.9 1264.5,756.2 1265.0,756.5 1265.5,756.7 1266.0,757.0 1266.5,757.2 1267.0,757.5 1267.5,757.7 1268.0,758.0 1268.5,758.2 1269.0,758.5 1269.5,758.7 1270.0,759.0 1270.5,759.2 1271.0,759.5 1271.5,759.7 1272.0,760.0 1272.5,760.2 1273.0,760.5 1273.5,760.7 1274.0,760.9 1274.5,761.2 1275.0,761.4 1275.5,761.7 1276.0,761.9 1276.5,762.1 1277.0,762.4 1277.5,762.6 1278.0,762.9 1278.5,763.1 1279.0,763.3 1279.5,763.6 1280.0,763.8 1280.5,764.0 1281.0,764.3 1281.5,764.5 1282.0,764.8 1282.5,765.0 1283.0,765.2 1283.5,765.5 1284.0,765.7 1284.5,765.9 1285.0,766.2 1285.5,766.4 1286.0,766.6 1286.5,766.9 1287.0,767.1 1287.5,767.3 1288.0,767.5 1288.5,767.8 1289.0,768.0 1289.5,768.2 1290.0,768.5 1290.5,768.7 1291.0,768.9 1291.5,769.1 1292.0,769.4 1292.5,769.6 1293.0,769.8 1293.5,770.0 1294.0,770.2 1294.5,770.5 1295.0,770.7 1295.5,770.9 1296.0,771.1 1296.5,771.3 1297.0,771.6 1297.5,771.8 1298.0,772.0 1298.5,772.2 1299.0,772.4 1299.5,772.6 1300.0,772.9 1300.5,773.1 1301.0,773.3 1301.5,773.5 1302.0,773.7 1302.5,773.9 1303.0,774.1 1303.5,774.3 1304.0,774.5 1304.5,774.7 1305.0,774.9 1305.5,775.1 1306.0,775.3 1306.5,775.5 1307.0,775.8 1307.5,776.0 1308.0,776.2 1308.5,776.4 1309.0,776.6 1309.5,776.8 1310.0,776.9 1310.5,777.1 1311.0,777.3 1311.5,777.5 1312.0,777.7 1312.5,777.9 1313.0,778.1 1313.5,778.3 1314.0,778.5 1314.5,778.7 1315.0,778.9 1315.5,779.1 1316.0,779.3 1316.5,779.5 1317.0,779.7 1317.5,779.9 1318.0,780.1 1318.5,780.3 1319.0,780.5 1319.5,780.7 1320.0,780.8 1320.5,781.0 1321.0,781.2 1321.5,781.4 1322.0,781.6 1322.5,781.8 1323.0,782.0 1323.5,782.2 1324.0,782.4 1324.5,782.6 1325.0,782.8 1325.5,783.0 1326.0,783.2 1326.5,783.4 1327.0,783.6 1327.5,783.8 1328.0,784.0 1328.5,784.2 1329.0,784.3 1329.5,784.5 1330.0,784.7 1330.5,784.9 1331.0,785.1 1331.5,785.3 1332.0,785.5 1332.5,785.7 1333.0,785.9 1333.5,786.1 1334.0,786.3 1334.5,786.5 1335.0,786.7 1335.5,786.8 1336.0,787.0 1336.5,787.2 1337.0,787.4 1337.5,787.6 1338.0,787.8 1338.5,788.0 1339.0,788.1 1339.5,788.3 1340.0,788.5 1340.5,788.7 1341.0,788.9 1341.5,789.0 1342.0,789.2 1342.5,789.4 1343.0,789.6 1343.5,789.7 1344.0,789.9 1344.5,790.1 1345.0,790.3 1345.5,790.4 1346.0,790.6 1346.5,790.8 1347.0,790.9 1347.5,791.1 1348.0,791.2 1348.5,791.4 1349.0,791.6 1349.5,791.7 1350.0,791.9 1350.5,792.1 1351.0,792.2 1351.5,792.4 1352.0,792.5 1352.5,792.7 1353.0,792.8 1353.5,793.0 1354.0,793.2 1354.5,793.3 1355.0,793.5 1355.5,793.6 1356.0,793.8 1356.5,793.9 1357.0,794.1 1357.5,794.2 1358.0,794.4 1358.5,794.5 1359.0,794.7 1359.5,794.9 1360.0,795.0 1360.5,795.2 1361.0,795.3 1361.5,795.5 1362.0,795.6 1362.5,795.8 1363.0,795.9 1363.5,796.1 1364.0,796.2 1364.5,796.4 1365.0,796.5 1365.5,796.7 1366.0,796.9 1366.5,797.0 1367.0,797.2 1367.5,797.3 1368.0,797.5 1368.5,797.6 1369.0,797.8 1369.5,797.9 1370.0,798.1 1370.5,798.2 1371.0,798.4 1371.5,798.5 1372.0,798.7 1372.5,798.8 1373.0,798.9 1373.5,799.1 1374.0,799.2 1374.5,799.4 1375.0,799.5 1375.5,799.7 1376.0,799.8 1376.5,800.0 1377.0,800.1 1377.5,800.2 1378.0,800.4 1378.5,800.5 1379.0,800.7 1379.5,800.8 1380.0,800.9 1380.5,801.1 1381.0,801.2 1381.5,801.3 1382.0,801.5 1382.5,801.6 1383.0,801.7 1383.5,801.8 1384.0,802.0 1384.5,802.1 1385.0,802.2 1385.5,802.4 1386.0,802.5 1386.5,802.6 1387.0,802.7 1387.5,802.8 1388.0,803.0 1388.5,803.1 1389.0,803.2 1389.5,803.3 1390.0,803.4 1390.5,803.5 1391.0,803.7 1391.5,803.8 1392.0,803.9 1392.5,804.0 1393.0,804.1 1393.5,804.2 1394.0,804.3 1394.5,804.5 1395.0,804.6 1395.5,804.7 1396.0,804.8 1396.5,804.9 1397.0,805.0 1397.5,805.1 1398.0,805.2 1398.5,805.3 1399.0,805.4 1399.5,805.5 1400.0,805.6 1400.5,805.7 1401.0,805.8 1401.5,805.9 1402.0,806.0 1402.5,806.1 1403.0,806.2 1403.5,806.3 1404.0,806.4 1404.5,806.5 1405.0,806.6 1405.5,806.7 1406.0,806.8 1406.5,806.9 1407.0,807.0 1407.5,807.1 1408.0,807.2 1408.5,807.3 1409.0,807.4 1409.5,807.5 1410.0,807.6 1410.5,807.7 1411.0,807.8 1411.5,807.9 1412.0,807.9 1412.5,808.0 1413.0,808.1 1413.5,808.2 1414.0,808.3 1414.5,808.4 1415.0,808.5 1415.5,808.6 1416.0,808.6 1416.5,808.7 1417.0,808.8 1417.5,808.9 1418.0,809.0 1418.5,809.1 1419.0,809.2 1419.5,809.2 1420.0,809.3 1420.5,809.4 1421.0,809.5 1421.5,809.6 1422.0,809.6 1422.5,809.7 1423.0,809.8 1423.5,809.9 1424.0,810.0 1424.5,810.1 1425.0,810.1 1425.5,810.2 1426.0,810.3 1426.5,810.4 1427.0,810.5 1427.5,810.5 1428.0,810.6 1428.5,810.7 1429.0,810.8 1429.5,810.9 1430.0,811.0 1430.5,811.0 1431.0,811.1 1431.5,811.2 1432.0,811.3 1432.5,811.4 1433.0,811.5 1433.5,811.5 1434.0,811.6 1434.5,811.7 1435.0,811.8 1435.5,811.9 1436.0,811.9"/>
<polyline stroke="#ffff40" points="125.0,848.5 125.5,848.5 126.0,848.5 126.5,848.5 127.0,848.5 127.5,848.5 128.0,848.5 128.5,848.5 129.0,848.5 129.5,848.5 130.0,848.5 130.5,848.5 131.0,848.5 131.5,848.5 132.0,848.5 132.5,848.5 133.0,848.5 133.5,848.5 134.0,848.5 134.5,848.5 135.0,848.5 135.5,848.5 136.0,848.5 136.5,848.5 137.0,848.5 137.5,848.5 138.0,848.5 138.5,848.5 139.0,848.5 139.5,848.5 140.0,848.5 140.5,848.5 141.0,848.5 141.5,848.5 142.0,848.5 142.5,848.5 143.0,848.5 143.5,848.5 144.0,848.5 144.5,848.5 145.0,848.5 145.5,848.5 146.0,848.5 146.5,848.5 147.0,848.5 147.5,848.5 148.0,848.5 148.5,848.5 149.0,848.5 149.5,848.5 150.0,848.5 150.5,848.5 151.0,848.5 151.5,848.5 152.0,848.5 152.5,848.5 153.0,848.5 153.5,848.5 154.0,848.5 154.5,848.5 155.0,848.5 155.5,848.5 156.0,848.5 156.5,848.5 157.0,848.5 157.5,848.5 158.0,848.5 158.5,848.5 159.0,848.5 159.5,848.5 160.0,848.5 160.5,848.5 161.0,848.5 161.5,848.5 162.0,848.5 162.5,848.5 163.0,848.5 163.5,848.5 164.0,848.5 164.5,848.5 165.0,848.5 165.5,848.5 166.0,848.5 166.5,848.5 167.0,848.5 167.5,848.5 168.0,848.5 168.5,848.5 169.0,848.5 169.5,848.5 170.0,848.5 170.5,848.5 171.0,848.5 171.5,848.5 172.0,848.5 172.5,848.5 173.0,848.5 173.5,848.5 174.0,848.5 174.5,848.5 175.0,848.5 175.5,848.5 176.0,848.5 176.5,848.5 177.0,848.5 177.5,848.5 178.0,848.5 178.5,848.5 179.0,848.5 179.5,848.5 180.0,848.5 180.5,848.5 181.0,848.5 181.5,848.5 182.0,848.5 182.5,848.5 183.0,848.5 183.5,848.5 184.0,848.5 184.5,848.5 185.0,848.5 185.5,848.5 186.0,848.5 186.5,848.5 187.0,848.5 187.5,848.5 188.0,848.5 188.5,848.5 189.0,848.5 189.5,848.5 190.0,848.5 190.5,848.5 191.0,848.5 191.5,848.5 192.0,848.5 192.5,848.5 193.0,848.5 193.5,848.5 194.0,848.5 194.5,848.5 195.0,848.5 195.5,848.5 196.0,848.5 196.5,848.5 197.0,848.5 197.5,848.5 198.0,848.5 198.5,848.5 199.0,848.5 199.5,848.5 200.0,848.5 200.5,848.5 201.0,848.5 201.5,848.5 202.0,848.5 202.5,848.5 203.0,848.5 203.5,848.5 204.0,848.5 204.5,848.5 205.0,848.5 205.5,848.5 206.0,848.5 206.5,848.5 207.0,848.5 207.5,848.5 208.0,848.5 208.5,848.5 209.0,848.5 209.5,848.5 210.0,848.5 210.5,848.5 211.0,848.5 211.5,848.5 212.0,848.5 212.5,848.5 213.0,848.5 213.5,848.5 214.0,848.5 214.5,848.5 215.0,848.5 215.5,848.5 216.0,848.5 216.5,848.5 217.0,848.5 217.5,848.5 218.0,848.5 218.5,848.5 219.0,848.5 219.5,848.5 220.0,848.5 220.5,848.5 221.0,848.5 221.5,848.5 222.0,848.5 222.5,848.5 223.0,848.5 223.5,848.5 224.0,848.5 224.5,848.5 225.0,848.5 225.5,848.5 226.0,848.5 226.5,848.5 227.0,848.5 227.5,848.5 228.0,848.5 228.5,848.5 229.0,848.5 229.5,848.5 230.0,848.5 230.5,848.5 231.0,848.5 231.5,848.5 232.0,848.5 232.5,848.5 233.0,848.5 233.5,848.5 234.0,848.5 234.5,848.5 235.0,848.5 235.5,848.5 236.0,848.5 236.5,848.5 237.0,848.5 237.5,848.5 238.0,848.5 238.5,848.5 239.0,848.5 239.5,848.5 240.0,848.5 240.5,848.5 241.0,848.5 241.5,848.5 242.0,848.5 242.5,848.5 243.0,848.5 243.5,848.5 244.0,848.5 244.5,848.5 245.0,848.5 245.5,848.5 246.0,848.5 246.5,848.5 247.0,848.5 247.5,848.5 248.0,848.5 248.5,848.5 249.0,848.5 249.5,848.5 250.0,848.5 250.5,848.5 251.0,848.5 251.5,848.5 252.0,848.5 252.5,848.5 253.0,848.5 253.5,848.5 254.0,848.5 254.5,848.5 255.0,848.5 255.5,848.5 256.0,848.5 256.5,848.5 257.0,848.5 257.5,848.5 258.0,848.5 258.5,848.5 259.0,848.5 259.5,848.5 260.0,848.5 260.5,848.5 261.0,848.5 261.5,848.5 262.0,848.5 262.5,848.5 263.0,848.5 263.5,848.5 264.0,848.5 264.5,848.5 265.0,848.5 265.5,848.5 266.0,848.5 266.5,848.5 267.0,848.5 267.5,848.5 268.0,848.5 268.5,848.5 269.0,848.5 269.5,848.5 270.0,848.5 270.5,848.4 271.0,848.2 271.5,848.0 272.0,847.8 272.5,847.6 273.0,847.5 273.5,847.5 274.0,847.5 274.5,847.5 275.0,847.5 275.5,847.5 276.0,847.5 276.5,847.5 277.0,847.5 277.5,847.5 278.0,847.5 278.5,847.5 279.0,847.5 279.5,847.5 280.0,847.5 280.5,847.5 281.0,847.5 281.5,847.5 282.0,847.5 282.5,847.5 283.0,847.5 283.5,847.5 284.0,847.5 284.5,847.5 285.0,847.5 285.5,847.5 286.0,847.5 286.5,847.5 287.0,847.5 287.5,847.5 288.0,847.5 288.5,847.5 289.0,847.5 289.5,847.5 290.0,847.5 290.5,847.5 291.0,847.5 291.5,847.5 292.0,847.5 292.5,847.5 293.0,847.5 293.5,847.5 294.0,847.5 294.5,847.5 295.0,847.5 295.5,847.5 296.0,847.5 296.5,847.5 297.0,847.5 297.5,847.5 298.0,847.5 298.5,847.5 299.0,847.5 299.5,847.5 300.0,847.5 300.5,847.5 301.0,847.5 301.5,847.5 302.0,847.5 302.5,847.5 303.0,847.5 303.5,847.5 304.0,847.5 304.5,847.5 305.0,847.5 305.5,847.5 306.0,847.5 306.5,847.5 307.0,847.5 307.5,847.5 308.0,847.5 308.5,847.5 309.0,847.5 309.5,847.5 310.0,847.5 310.5,847.5 311.0,847.5 311.5,847.5 312.0,847.5 312.5,847.5 313.0,847.5 313.5,847.5 314.0,847.5 314.5,847.5 315.0,847.5 315.5,847.5 316.0,847.5 316.5,847.5 317.0,847.5 317.5,847.5 318.0,847.5 318.5,847.5 319.0,847.5 319.5,847.5 320.0,847.5 320.5,847.5 321.0,847.5 321.5,847.5 322.0,847.5 322.5,847.5 323.0,847.7 323.5,847.8 324.0,848.0 324.5,848.2 325.0,848.3 325.5,848.5 326.0,848.5 326.5,848.5 327.0,848.5 327.5,848.5 328.0,848.5 328.5,848.5 329.0,848.5 329.5,848.5 330.0,848.5 330.5,848.5 331.0,848.5 331.5,848.5 332.0,848.5 332.5,848.5 333.0,848.5 333.5,848.5 334.0,848.5 334.5,848.5 335.0,848.5 335.5,848.5 336.0,848.5 336.5,848.5 337.0,848.5 337.5,848.5 338.0,848.5 338.5,848.5 339.0,848.5 339.5,848.5 340.0,848.5 340.5,848.5 341.0,848.5 341.5,848.5 342.0,848.5 342.5,848.5 343.0,848.5 343.5,848.5 344.0,848.5 344.5,848.5 345.0,848.5 345.5,848.5 346.0,848.5 346.5,848.5 347.0,848.5 347.5,848.5 348.0,848.5 348.5,848.5 349.0,848.5 349.5,848.5 350.0,848.5 350.5,848.5 351.0,848.5 351.5,848.5 352.0,848.5 352.5,848.5 353.0,848.5 353.5,848.5 354.0,848.5 354.5,848.5 355.0,848.5 355.5,848.5 356.0,848.5 356.5,848.5 357.0,848.5 357.5,848.5 358.0,848.5 358.5,848.5 359.0,848.5 359.5,848.5 360.0,848.5 360.5,848.5 361.0,848.5 361.5,848.5 362.0,848.5 362.5,848.5 363.0,848.5 363.5,848.5 364.0,848.5 364.5,848.5 365.0,848.5 365.5,848.5 366.0,848.5 366.5,848.5 367.0,848.5 367.5,848.5 368.0,848.5 368.5,848.5 369.0,848.5 369.5,848.5 370.0,848.5 370.5,848.5 371.0,848.5 371.5,848.5 372.0,848.5 372.5,848.5 373.0,848.5 373.5,848.5 374.0,848.5 374.5,848.5 375.0,848.5 375.5,848.5 376.0,848.5 376.5,848.5 377.0,848.5 377.5,848.5 378.0,848.5 378.5,848.5 379.0,848.5 379.5,848.5 380.0,848.5 380.5,848.5 381.0,848.5 381.5,848.5 382.0,848.5 382.5,848.5 383.0,848.5 383.5,848.5 384.0,848.5 384.5,848.5 385.0,848.5 385.5,848.5 386.0,848.5 386.5,848.5 387.0,848.5 387.5,848.5 388.0,848.5 388.5,848.5 389.0,848.5 389.5,848.5 390.0,848.5 390.5,848.5 391.0,848.5 391.5,848.5 392.0,848.5 392.5,848.5 393.0,848.5 393.5,848.5 394.0,848.5 394.5,848.5 395.0,848.5 395.5,848.5 396.0,848.5 396.5,848.5 397.0,848.5 397.5,848.5 398.0,848.5 398.5,848.5 399.0,848.5 399.5,848.5 400.0,848.5 400.5,848.5 401.0,848.5 401.5,848.5 402.0,848.5 402.5,848.5 403.0,848.5 403.5,848.5 404.0,848.5 404.5,848.5 405.0,848.5 405.5,848.5 406.0,848.5 406.5,848.5 407.0,848.5 407.5,848.5 408.0,848.5 408.5,848.5 409.0,848.5 409.5,848.5 410.0,848.5 410.5,848.5 411.0,848.5 411.5,848.5 412.0,848.5 412.5,848.5 413.0,848.5 413.5,848.5 414.0,848.5 414.5,848.5 415.0,848.5 415.5,848.5 416.0,848.5 416.5,848.5 417.0,848.5 417.5,848.5 418.0,848.5 418.5,848.5 419.0,848.5 419.5,848.5 420.0,848.5 420.5,848.5 421.0,848.5 421.5,848.5 422.0,848.5 422.5,848.5 423.0,848.5 423.5,848.5 424.0,848.5 424.5,848.5 425.0,848.5 425.5,848.5 426.0,848.5 426.5,848.5 427.0,848.5 427.5,848.5 428.0,848.5 428.5,848.5 429.0,848.5 429.5,848.5 430.0,848.5 430.5,848.5 431.0,848.5 431.5,848.5 432.0,848.5 432.5,848.5 433.0,848.5 433.5,848.5 434.0,848.5 434.5,848.5 435.0,848.5 435.5,848.5 436.0,848.5 436.5,848.5 437.0,848.5 437.5,848.5 438.0,848.5 438.5,848.5 439.0,848.5 439.5,848.5 440.0,848.5 440.5,848.5 441.0,848.5 441.5,848.5 442.0,848.5 442.5,848.5 443.0,848.5 443.5,848.5 444.0,848.5 444.5,848.5 445.0,848.5 445.5,848.5 446.0,848.5 446.5,848.5 447.0,848.5 447.5,848.5 448.0,848.5 448.5,848.5 449.0,848.5 449.5,848.5 450.0,848.5 450.5,848.5 451.0,848.5 451.5,848.5 452.0,848.5 452.5,848.5 453.0,848.5 453.5,848.5 454.0,848.5 454.5,848.5 455.0,848.5 455.5,848.5 456.0,848.5 456.5,848.5 457.0,848.5 457.5,848.5 458.0,848.5 458.5,848.5 459.0,848.5 459.5,848.5 460.0,848.5 460.5,848.5 461.0,848.5 461.5,848.5 462.0,848.5 462.5,848.5 463.0,848.5 463.5,848.5 464.0,848.5 464.5,848.5 465.0,848.5 465.5,848.5 466.0,848.5 466.5,848.5 467.0,848.5 467.5,848.5 468.0,848.5 468.5,848.5 469.0,848.5 469.5,848.5 470.0,848.5 470.5,848.5 471.0,848.5 471.5,848.5 472.0,848.5 472.5,848.5 473.0,848.5 473.5,848.5 474.0,848.5 474.5,848.5 475.0,848.5 475.5,848.5 476.0,848.5 476.5,848.5 477.0,848.5 477.5,848.5 478.0,848.5 478.5,848.5 479.0,848.5 479.5,848.5 480.0,848.5 480.5,848.5 481.0,848.5 481.5,848.5 482.0,848.5 482.5,848.5 483.0,848.5 483.5,848.5 484.0,848.5 484.5,848.5 485.0,848.5 485.5,848.5 486.0,848.5 486.5,848.5 487.0,848.5 487.5,848.5 488.0,848.5 488.5,848.5 489.0,848.5 489.5,848.5 490.0,848.5 490.5,848.5 491.0,848.5 491.5,848.5 492.0,848.5 492.5,848.5 493.0,848.5 493.5,848.5 494.0,848.5 494.5,848.5 495.0,848.5 495.5,848.5 496.0,848.5 496.5,848.5 497.0,848.5 497.5,848.5 498.0,848.5 498.5,848.5 499.0,848.5 499.5,848.5 500.0,848.5 500.5,848.5 501.0,848.5 501.5,848.5 502.0,848.5 502.5,848.5 503.0,848.5 503.5,848.5 504.0,848.5 504.5,848.5 505.0,848.5 505.5,848.5 506.0,848.5 506.5,848.5 507.0,848.5 507.5,848.5 508.0,848.5 508.5,848.5 509.0,848.5 509.5,848.5 510.0,848.5 510.5,848.5 511.0,848.5 511.5,848.5 512.0,848.5 512.5,848.5 513.0,848.5 513.5,848.5 514.0,848.5 514.5,848.5 515.0,848.5 515.5,848.5 516.0,848.5 516.5,848.5 517.0,848.5 517.5,848.5 518.0,848.5 518.5,848.5 519.0,848.5 519.5,848.5 520.0,848.5 520.5,848.5 521.0,848.5 521.5,848.5 522.0,848.5 522.5,848.5 523.0,848.5 523.5,848.5 524.0,848.5 524.5,848.5 525.0,848.5 525.5,848.5 526.0,848.5 526.5,848.5 527.0,848.5 527.5,848.5 528.0,848.5 528.5,848.5 529.0,848.5 529.5,848.5 530.0,848.5 530.5,848.5 531.0,848.5 531.5,848.5 532.0,848.5 532.5,848.5 533.0,848.5 533.5,848.5 534.0,848.5 534.5,848.5 535.0,848.5 535.5,848.5 536.0,848.5 536.5,848.5 537.0,848.5 537.5,848.5 538.0,848.5 538.5,848.5 539.0,848.5 539.5,848.5 540.0,848.5 540.5,848.5 541.0,848.5 541.5,848.5 542.0,848.5 542.5,848.5 543.0,848.5 543.5,848.5 544.0,848.5 544.5,848.5 545.0,848.5 545.5,848.5 546.0,848.5 546.5,848.5 547.0,848.5 547.5,848.5 548.0,848.5 548.5,848.5 549.0,848.5 549.5,848.5 550.0,848.5 550.5,848.5 551.0,848.5 551.5,848.5 552.0,848.5 552.5,848.5 553.0,848.5 553.5,848.5 554.0,848.5 554.5,848.5 555.0,848.5 555.5,848.5 556.0,848.5 556.5,848.5 557.0,848.5 557.5,848.5 558.0,848.5 558.5,848.5 559.0,848.5 559.5,848.5 560.0,848.5 560.5,848.5 561.0,848.5 561.5,848.5 562.0,848.5 562.5,848.5 563.0,848.5 563.5,848.5 564.0,848.5 564.5,848.5 565.0,848.5 565.5,848.5 566.0,848.5 566.5,848.5 567.0,848.5 567.5,848.5 568.0,848.5 568.5,848.5 569.0,848.5 569.5,848.5 570.0,848.5 570.5,848.5 571.0,848.5 571.5,848.5 572.0,848.5 572.5,848.5 573.0,848.5 573.5,848.5 574.0,848.5 574.5,848.5 575.0,848.5 575.5,848.5 576.0,848.5 576.5,848.5 577.0,848.5 577.5,848.5 578.0,848.5 578.5,848.5 579.0,848.5 579.5,848.5 580.0,848.5 580.5,848.5 581.0,848.5 581.5,848.5 582.0,848.5 582.5,848.5 583.0,848.5 583.5,848.5 584.0,848.5 584.5,848.5 585.0,848.5 585.5,848.5 586.0,848.5 586.5,848.5 587.0,848.5 587.5,848.5 588.0,848.5 588.5,848.5 589.0,848.5 589.5,848.5 590.0,848.5 590.5,848.4 591.0,848.4 591.5,848.3 592.0,848.1 592.5,847.7 593.0,847.2 593.5,846.5 594.0,845.7 594.5,844.9 595.0,844.0 595.5,843.1 596.0,842.2 596.5,841.4 597.0,840.5 597.5,839.6 598.0,838.7 598.5,837.7 599.0,836.6 599.5,835.6 600.0,834.5 600.5,833.3 601.0,832.2 601.5,831.1 602.0,829.9 602.5,828.7 603.0,827.6 603.5,826.4 604.0,825.3 604.5,824.1 605.0,823.0 605.5,821.8 606.0,820.7 606.5,819.5 607.0,818.3 607.5,817.1 608.0,815.9 608.5,814.7 609.0,813.5 609.5,812.3 610.0,811.0 610.5,809.8 611.0,808.6 611.5,807.3 612.0,806.1 612.5,804.8 613.0,803.6 613.5,802.3 614.0,801.1 614.5,799.8 615.0,798.6 615.5,797.3 616.0,796.1 616.5,794.8 617.0,793.6 617.5,792.3 618.0,791.1 618.5,789.8 619.0,788.6 619.5,787.3 620.0,786.1 620.5,784.9 621.0,783.6 621.5,782.4 622.0,781.2 622.5,780.0 623.0,778.8 623.5,777.6 624.0,776.4 624.5,775.2 625.0,774.1 625.5,772.9 626.0,771.8 626.5,770.6 627.0,769.5 627.5,768.3 628.0,767.2 628.5,766.1 629.0,764.9 629.5,763.8 630.0,762.6 630.5,761.5 631.0,760.3 631.5,759.1 632.0,757.9 632.5,756.7 633.0,755.5 633.5,754.3 634.0,753.1 634.5,751.8 635.0,750.5 635.5,749.2 636.0,747.9 636.5,746.6 637.0,745.2 637.5,743.7 638.0,742.2 638.5,740.7 639.0,739.1 639.5,737.5 640.0,735.9 640.5,734.3 641.0,732.8 641.5,731.2 642.0,729.7 642.5,728.2 643.0,726.8 643.5,725.5 644.0,724.2 644.5,722.9 645.0,721.6 645.5,720.4 646.0,719.2 646.5,718.1 647.0,716.9 647.5,715.8 648.0,714.6 648.5,713.5 649.0,712.4 649.5,711.4 650.0,710.3 650.5,709.2 651.0,708.2 651.5,707.1 652.0,706.1 652.5,705.1 653.0,704.0 653.5,703.0 654.0,702.0 654.5,700.9 655.0,699.9 655.5,698.9 656.0,697.8 656.5,696.8 657.0,695.7 657.5,694.7 658.0,693.6 658.5,692.5 659.0,691.4 659.5,690.3 660.0,689.1 660.5,688.0 661.0,686.8 661.5,685.6 662.0,684.4 662.5,683.1 663.0,681.8 663.5,680.5 664.0,679.0 664.5,677.6 665.0,676.2 665.5,674.8 666.0,673.5 666.5,672.2 667.0,671.1 667.5,669.9 668.0,668.8 668.5,667.7 669.0,666.6 669.5,665.5 670.0,664.5 670.5,663.4 671.0,662.4 671.5,661.4 672.0,660.4 672.5,659.4 673.0,658.4 673.5,657.4 674.0,656.4 674.5,655.5 675.0,654.5 675.5,653.6 676.0,652.7 676.5,651.7 677.0,650.8 677.5,649.9 678.0,649.0 678.5,648.1 679.0,647.3 679.5,646.4 680.0,645.5 680.5,644.6 681.0,643.8 681.5,642.9 682.0,642.1 682.5,641.2 683.0,640.4 683.5,639.5 684.0,638.7 684.5,637.8 685.0,637.0 685.5,636.1 686.0,635.3 686.5,634.5 687.0,633.7 687.5,632.9 688.0,632.1 688.5,631.3 689.0,630.6 689.5,629.8 690.0,629.1 690.5,628.3 691.0,627.6 691.5,626.8 692.0,626.1 692.5,625.4 693.0,624.7 693.5,623.9 694.0,623.2 694.5,622.5 695.0,621.7 695.5,621.0 696.0,620.3 696.5,619.5 697.0,618.8 697.5,618.0 698.0,617.2 698.5,616.5 699.0,615.7 699.5,614.9 700.0,614.0 700.5,613.2 701.0,612.3 701.5,611.4 702.0,610.5 702.5,609.5 703.0,608.6 703.5,607.6 704.0,606.6 704.5,605.6 705.0,604.6 705.5,603.6 706.0,602.6 706.5,601.6 707.0,600.6 707.5,599.6 708.0,598.6 708.5,597.6 709.0,596.7 709.5,595.8 710.0,594.8 710.5,593.9 711.0,593.0 711.5,592.2 712.0,591.3 712.5,590.4 713.0,589.6 713.5,588.8 714.0,587.9 714.5,587.1 715.0,586.2 715.5,585.4 716.0,584.6 716.5,583.7 717.0,582.8 717.5,581.9 718.0,581.1 718.5,580.2 719.0,579.3 719.5,578.4 720.0,577.6 720.5,576.7 721.0,575.9 721.5,575.1 722.0,574.3 722.5,573.5 723.0,572.7 723.5,571.9 724.0,571.1 724.5,570.4 725.0,569.6 725.5,568.9 726.0,568.2 726.5,567.4 727.0,566.7 727.5,565.9 728.0,565.2 728.5,564.5 729.0,563.7 729.5,563.0 730.0,562.3 730.5,561.5 731.0,560.9 731.5,560.2 732.0,559.5 732.5,558.9 733.0,558.3 733.5,557.7 734.0,557.2 734.5,556.7 735.0,556.2 735.5,555.7 736.0,555.3 736.5,554.9 737.0,554.4 737.5,554.0 738.0,553.5 738.5,553.0 739.0,552.6 739.5,552.0 740.0,551.5 740.5,550.9 741.0,550.2 741.5,549.5 742.0,548.8 742.5,548.1 743.0,547.3 743.5,546.5 744.0,545.7 744.5,544.9 745.0,544.1 745.5,543.2 746.0,542.4 746.5,541.6 747.0,540.8 747.5,540.1 748.0,539.3 748.5,538.6 749.0,537.9 749.5,537.2 750.0,536.6 750.5,535.9 751.0,535.3 751.5,534.6 752.0,534.0 752.5,533.3 753.0,532.7 753.5,532.0 754.0,531.4 754.5,530.7 755.0,530.0 755.5,529.3 756.0,528.6 756.5,528.0 757.0,527.3 757.5,526.7 758.0,526.0 758.5,525.4 759.0,524.9 759.5,524.3 760.0,523.8 760.5,523.3 761.0,522.9 761.5,522.4 762.0,522.0 762.5,521.5 763.0,521.1 763.5,520.6 764.0,520.1 764.5,519.6 765.0,519.1 765.5,518.6 766.0,518.0 766.5,517.4 767.0,516.7 767.5,516.1 768.0,515.4 768.5,514.6 769.0,513.9 769.5,513.2 770.0,512.5 770.5,511.8 771.0,511.1 771.5,510.4 772.0,509.8 772.5,509.2 773.0,508.7 773.5,508.2 774.0,507.7 774.5,507.3 775.0,506.9 775.5,506.5 776.0,506.1 776.5,505.8 777.0,505.5 777.5,505.1 778.0,504.8 778.5,504.4 779.0,504.0 779.5,503.6 780.0,503.2 780.5,502.8 781.0,502.3 781.5,501.8 782.0,501.3 782.5,500.8 783.0,500.3 783.5,499.7 784.0,499.2 784.5,498.7 785.0,498.1 785.5,497.6 786.0,497.1 786.5,496.6 787.0,496.1 787.5,495.6 788.0,495.1 788.5,494.6 789.0,494.1 789.5,493.6 790.0,493.0 790.5,492.5 791.0,491.9 791.5,491.2 792.0,490.6 792.5,489.9 793.0,489.2 793.5,488.5 794.0,487.8 794.5,487.1 795.0,486.4 795.5,485.7 796.0,485.0 796.5,484.3 797.0,483.7 797.5,483.1 798.0,482.5 798.5,482.1 799.0,481.6 799.5,481.2 800.0,480.9 800.5,480.5 801.0,480.3 801.5,480.0 802.0,479.8 802.5,479.6 803.0,479.4 803.5,479.1 804.0,478.9 804.5,478.6 805.0,478.4 805.5,478.1 806.0,477.7 806.5,477.4 807.0,477.0 807.5,476.5 808.0,476.1 808.5,475.6 809.0,475.1 809.5,474.6 810.0,474.1 810.5,473.6 811.0,473.2 811.5,472.7 812.0,472.2 812.5,471.7 813.0,471.2 813.5,470.8 814.0,470.3 814.5,469.9 815.0,469.4 815.5,468.9 816.0,468.5 816.5,468.0 817.0,467.5 817.5,466.9 818.0,466.4 818.5,465.8 819.0,465.2 819.5,464.6 820.0,464.0 820.5,463.4 821.0,462.7 821.5,462.1 822.0,461.6 822.5,461.0 823.0,460.4 823.5,459.9 824.0,459.5 824.5,459.0 825.0,458.6 825.5,458.3 826.0,457.9 826.5,457.6 827.0,457.4 827.5,457.1 828.0,456.8 828.5,456.6 829.0,456.3 829.5,456.0 830.0,455.7 830.5,455.3 831.0,455.0 831.5,454.5 832.0,454.1 832.5,453.6 833.0,453.1 833.5,452.6 834.0,452.0 834.5,451.4 835.0,450.9 835.5,450.3 836.0,449.7 836.5,449.2 837.0,448.7 837.5,448.2 838.0,447.7 838.5,447.3 839.0,446.9 839.5,446.5 840.0,446.2 840.5,445.9 841.0,445.6 841.5,445.3 842.0,445.0 842.5,444.7 843.0,444.5 843.5,444.2 844.0,443.9 844.5,443.6 845.0,443.3 845.5,443.0 846.0,442.7 846.5,442.4 847.0,442.2 847.5,441.9 848.0,441.6 848.5,441.3 849.0,441.1 849.5,440.9 850.0,440.7 850.5,440.5 851.0,440.3 851.5,440.2 852.0,440.1 852.5,440.0 853.0,439.8 853.5,439.7 854.0,439.6 854.5,439.4 855.0,439.2 855.5,439.0 856.0,438.8 856.5,438.5 857.0,438.1 857.5,437.7 858.0,437.3 858.5,436.8 859.0,436.3 859.5,435.8 860.0,435.2 860.5,434.7 861.0,434.1 861.5,433.5 862.0,433.0 862.5,432.4 863.0,431.9 863.5,431.4 864.0,431.0 864.5,430.6 865.0,430.2 865.5,429.9 866.0,429.6 866.5,429.3 867.0,429.1 867.5,428.9 868.0,428.6 868.5,428.4 869.0,428.2 869.5,428.0 870.0,427.8 870.5,427.6 871.0,427.3 871.5,427.1 872.0,426.8 872.5,426.5 873.0,426.2 873.5,426.0 874.0,425.7 874.5,425.4 875.0,425.2 875.5,424.9 876.0,424.7 876.5,424.5 877.0,424.3 877.5,424.1 878.0,423.9 878.5,423.8 879.0,423.6 879.5,423.4 880.0,423.3 880.5,423.1 881.0,422.8 881.5,422.6 882.0,422.3 882.5,422.0 883.0,421.6 883.5,421.2 884.0,420.8 884.5,420.4 885.0,419.9 885.5,419.4 886.0,418.9 886.5,418.4 887.0,417.9 887.5,417.4 888.0,416.9 888.5,416.5 889.0,416.1 889.5,415.7 890.0,415.4 890.5,415.1 891.0,414.9 891.5,414.6 892.0,414.4 892.5,414.3 893.0,414.1 893.5,414.0 894.0,413.8 894.5,413.7 895.0,413.5 895.5,413.3 896.0,413.1 896.5,412.9 897.0,412.6 897.5,412.3 898.0,412.0 898.5,411.7 899.0,411.3 899.5,410.9 900.0,410.5 900.5,410.2 901.0,409.8 901.5,409.4 902.0,409.0 902.5,408.7 903.0,408.4 903.5,408.0 904.0,407.7 904.5,407.4 905.0,407.2 905.5,406.9 906.0,406.6 906.5,406.3 907.0,406.1 907.5,405.8 908.0,405.5 908.5,405.2 909.0,404.8 909.5,404.5 910.0,404.1 910.5,403.8 911.0,403.4 911.5,403.1 912.0,402.8 912.5,402.4 913.0,402.1 913.5,401.9 914.0,401.6 914.5,401.4 915.0,401.3 915.5,401.2 916.0,401.1 916.5,401.1 917.0,401.1 917.5,401.2 918.0,401.2 918.5,401.3 919.0,401.4 919.5,401.5 920.0,401.5 920.5,401.6 921.0,401.6 921.5,401.6 922.0,401.6 922.5,401.5 923.0,401.3 923.5,401.1 924.0,400.9 924.5,400.6 925.0,400.3 925.5,400.0 926.0,399.7 926.5,399.3 927.0,399.0 927.5,398.6 928.0,398.2 928.5,397.9 929.0,397.5 929.5,397.2 930.0,396.9 930.5,396.6 931.0,396.3 931.5,396.0 932.0,395.7 932.5,395.4 933.0,395.1 933.5,394.9 934.0,394.6 934.5,394.2 935.0,393.9 935.5,393.6 936.0,393.2 936.5,392.9 937.0,392.5 937.5,392.2 938.0,391.8 938.5,391.5 939.0,391.1 939.5,390.8 940.0,390.6 940.5,390.3 941.0,390.1 941.5,389.9 942.0,389.8 942.5,389.7 943.0,389.6 943.5,389.5 944.0,389.5 944.5,389.4 945.0,389.4 945.5,389.4 946.0,389.3 946.5,389.2 947.0,389.1 947.5,389.0 948.0,388.8 948.5,388.6 949.0,388.4 949.5,388.1 950.0,387.8 950.5,387.5 951.0,387.2 951.5,386.9 952.0,386.5 952.5,386.2 953.0,385.9 953.5,385.6 954.0,385.4 954.5,385.1 955.0,384.9 955.5,384.8 956.0,384.6 956.5,384.5 957.0,384.5 957.5,384.4 958.0,384.4 958.5,384.3 959.0,384.3 959.5,384.3 960.0,384.2 960.5,384.2 961.0,384.1 961.5,384.0 962.0,383.9 962.5,383.7 963.0,383.5 963.5,383.2 964.0,382.9 964.5,382.6 965.0,382.3 965.5,382.1 966.0,381.8 966.5,381.5 967.0,381.3 967.5,381.2 968.0,381.0 968.5,381.0 969.0,380.9 969.5,381.0 970.0,381.0 970.5,381.1 971.0,381.1 971.5,381.2 972.0,381.2 972.5,381.0 973.0,380.9 973.5,380.7 974.0,380.5 974.5,380.3 975.0,380.1 975.5,380.0 976.0,379.8 976.5,379.8 977.0,379.9 977.5,380.1 978.0,380.4 978.5,380.8 979.0,381.2 979.5,381.6 980.0,382.1 980.5,382.6 981.0,383.1 981.5,383.7 982.0,384.4 982.5,385.2 983.0,386.2 983.5,387.2 984.0,388.3 984.5,389.4 985.0,390.5 985.5,391.7 986.0,392.8 986.5,394.0 987.0,395.1 987.5,396.1 988.0,397.2 988.5,398.3 989.0,399.3 989.5,400.4 990.0,401.5 990.5,402.6 991.0,403.8 991.5,404.9 992.0,406.0 992.5,407.1 993.0,408.3 993.5,409.4 994.0,410.6 994.5,411.7 995.0,412.9 995.5,414.1 996.0,415.2 996.5,416.4 997.0,417.6 997.5,418.7 998.0,419.9 998.5,421.1 999.0,422.3 999.5,423.5 1000.0,424.6 1000.5,425.8 1001.0,427.0 1001.5,428.2 1002.0,429.3 1002.5,430.5 1003.0,431.7 1003.5,432.8 1004.0,434.0 1004.5,435.1 1005.0,436.3 1005.5,437.5 1006.0,438.6 1006.5,439.8 1007.0,440.9 1007.5,442.1 1008.0,443.2 1008.5,444.4 1009.0,445.6 1009.5,446.7 1010.0,447.9 1010.5,449.1 1011.0,450.2 1011.5,451.4 1012.0,452.6 1012.5,453.8 1013.0,454.9 1013.5,456.1 1014.0,457.3 1014.5,458.4 1015.0,459.6 1015.5,460.7 1016.0,461.9 1016.5,463.1 1017.0,464.2 1017.5,465.4 1018.0,466.5 1018.5,467.7 1019.0,468.8 1019.5,469.9 1020.0,471.1 1020.5,472.2 1021.0,473.3 1021.5,474.4 1022.0,475.6 1022.5,476.7 1023.0,477.8 1023.5,478.9 1024.0,480.0 1024.5,481.1 1025.0,482.2 1025.5,483.2 1026.0,484.3 1026.5,485.4 1027.0,486.5 1027.5,487.6 1028.0,488.7 1028.5,489.8 1029.0,490.8 1029.5,491.9 1030.0,493.0 1030.5,494.0 1031.0,495.1 1031.5,496.2 1032.0,497.2 1032.5,498.3 1033.0,499.3 1033.5,500.4 1034.0,501.4 1034.5,502.5 1035.0,503.5 1035.5,504.5 1036.0,505.6 1036.5,506.6 1037.0,507.6 1037.5,508.7 1038.0,509.7 1038.5,510.7 1039.0,511.7 1039.5,512.7 1040.0,513.7 1040.5,514.7 1041.0,515.7 1041.5,516.7 1042.0,517.7 1042.5,518.7 1043.0,519.6 1043.5,520.6 1044.0,521.6 1044.5,522.6 1045.0,523.5 1045.5,524.5 1046.0,525.5 1046.5,526.4 1047.0,527.4 1047.5,528.3 1048.0,529.3 1048.5,530.2 1049.0,531.2 1049.5,532.1 1050.0,533.0 1050.5,534.0 1051.0,534.9 1051.5,535.8 1052.0,536.8 1052.5,537.7 1053.0,538.6 1053.5,539.5 1054.0,540.4 1054.5,541.4 1055.0,542.3 1055.5,543.2 1056.0,544.1 1056.5,545.0 1057.0,545.9 1057.5,546.8 1058.0,547.7 1058.5,548.6 1059.0,549.4 1059.5,550.3 1060.0,551.2 1060.5,552.1 1061.0,553.0 1061.5,553.9 1062.0,554.8 1062.5,555.6 1063.0,556.5 1063.5,557.4 1064.0,558.3 1064.5,559.1 1065.0,560.0 1065.5,560.9 1066.0,561.7 1066.5,562.6 1067.0,563.5 1067.5,564.3 1068.0,565.2 1068.5,566.1 1069.0,566.9 1069.5,567.8 1070.0,568.6 1070.5,569.4 1071.0,570.3 1071.5,571.1 1072.0,572.0 1072.5,572.8 1073.0,573.6 1073.5,574.4 1074.0,575.3 1074.5,576.1 1075.0,576.9 1075.5,577.7 1076.0,578.5 1076.5,579.3 1077.0,580.1 1077.5,580.9 1078.0,581.7 1078.5,582.5 1079.0,583.3 1079.5,584.0 1080.0,584.8 1080.5,585.6 1081.0,586.3 1081.5,587.1 1082.0,587.9 1082.5,588.6 1083.0,589.4 1083.5,590.1 1084.0,590.8 1084.5,591.6 1085.0,592.3 1085.5,593.0 1086.0,593.8 1086.5,594.5 1087.0,595.2 1087.5,596.0 1088.0,596.7 1088.5,597.4 1089.0,598.1 1089.5,598.8 1090.0,599.5 1090.5,600.2 1091.0,600.9 1091.5,601.6 1092.0,602.3 1092.5,603.0 1093.0,603.7 1093.5,604.4 1094.0,605.1 1094.5,605.8 1095.0,606.4 1095.5,607.1 1096.0,607.8 1096.5,608.5 1097.0,609.1 1097.5,609.8 1098.0,610.5 1098.5,611.1 1099.0,611.8 1099.5,612.5 1100.0,613.1 1100.5,613.8 1101.0,614.4 1101.5,615.1 1102.0,615.7 1102.5,616.4 1103.0,617.0 1103.5,617.6 1104.0,618.3 1104.5,618.9 1105.0,619.5 1105.5,620.2 1106.0,620.8 1106.5,621.4 1107.0,622.0 1107.5,622.7 1108.0,623.3 1108.5,623.9 1109.0,624.5 1109.5,625.1 1110.0,625.7 1110.5,626.3 1111.0,626.9 1111.5,627.5 1112.0,628.1 1112.5,628.7 1113.0,629.3 1113.5,629.9 1114.0,630.5 1114.5,631.1 1115.0,631.7 1115.5,632.3 1116.0,632.9 1116.5,633.4 1117.0,634.0 1117.5,634.6 1118.0,635.1 1118.5,635.7 1119.0,636.3 1119.5,636.8 1120.0,637.4 1120.5,638.0 1121.0,638.5 1121.5,639.1 1122.0,639.6 1122.5,640.2 1123.0,640.7 1123.5,641.3 1124.0,641.8 1124.5,642.4 1125.0,642.9 1125.5,643.5 1126.0,644.0 1126.5,644.5 1127.0,645.1 1127.5,645.6 1128.0,646.1 1128.5,646.7 1129.0,647.2 1129.5,647.7 1130.0,648.2 1130.5,648.7 1131.0,649.2 1131.5,649.7 1132.0,650.2 1132.5,650.7 1133.0,651.2 1133.5,651.7 1134.0,652.2 1134.5,652.7 1135.0,653.1 1135.5,653.6 1136.0,654.1 1136.5,654.6 1137.0,655.1 1137.5,655.6 1138.0,656.1 1138.5,656.6 1139.0,657.1 1139.5,657.6 1140.0,658.1 1140.5,658.6 1141.0,659.1 1141.5,659.6 1142.0,660.1 1142.5,660.6 1143.0,661.2 1143.5,661.7 1144.0,662.2 1144.5,662.8 1145.0,663.3 1145.5,663.9 1146.0,664.4 1146.5,665.0 1147.0,665.5 1147.5,666.1 1148.0,666.6 1148.5,667.2 1149.0,667.7 1149.5,668.3 1150.0,668.9 1150.5,669.4 1151.0,670.0 1151.5,670.5 1152.0,671.0 1152.5,671.6 1153.0,672.1 1153.5,672.6 1154.0,673.2 1154.5,673.7 1155.0,674.2 1155.5,674.7 1156.0,675.2 1156.5,675.7 1157.0,676.2 1157.5,676.7 1158.0,677.2 1158.5,677.6 1159.0,678.1 1159.5,678.6 1160.0,679.1 1160.5,679.5 1161.0,680.0 1161.5,680.5 1162.0,680.9 1162.5,681.4 1163.0,681.9 1163.5,682.3 1164.0,682.8 1164.5,683.2 1165.0,683.7 1165.5,684.2 1166.0,684.6 1166.5,685.1 1167.0,685.5 1167.5,685.9 1168.0,686.4 1168.5,686.8 1169.0,687.3 1169.5,687.7 1170.0,688.2 1170.5,688.6 1171.0,689.0 1171.5,689.5 1172.0,689.9 1172.5,690.3 1173.0,690.8 1173.5,691.2 1174.0,691.6 1174.5,692.0 1175.0,692.5 1175.5,692.9 1176.0,693.3 1176.5,693.7 1177.0,694.2 1177.5,694.6 1178.0,695.0 1178.5,695.4 1179.0,695.8 1179.5,696.3 1180.0,696.7 1180.5,697.1 1181.0,697.5 1181.5,697.9 1182.0,698.3 1182.5,698.7 1183.0,699.1 1183.5,699.5 1184.0,699.9 1184.5,700.3 1185.0,700.7 1185.5,701.2 1186.0,701.5 1186.5,701.9 1187.0,702.3 1187.5,702.7 1188.0,703.1 1188.5,703.5 1189.0,703.9 1189.5,704.3 1190.0,704.7 1190.5,705.1 1191.0,705.5 1191.5,705.9 1192.0,706.3 1192.5,706.7 1193.0,707.1 1193.5,707.4 1194.0,707.8 1194.5,708.2 1195.0,708.6 1195.5,709.0 1196.0,709.4 1196.5,709.8 1197.0,710.2 1197.5,710.5 1198.0,710.9 1198.5,711.3 1199.0,711.7 1199.5,712.1 1200.0,712.5 1200.5,712.9 1201.0,713.3 1201.5,713.6 1202.0,714.0 1202.5,714.4 1203.0,714.8 1203.5,715.2 1204.0,715.6 1204.5,716.0 1205.0,716.3 1205.5,716.7 1206.0,717.1 1206.5,717.5 1207.0,717.9 1207.5,718.3 1208.0,718.6 1208.5,719.0 1209.0,719.4 1209.5,719.8 1210.0,720.1 1210.5,720.5 1211.0,720.9 1211.5,721.3 1212.0,721.6 1212.5,722.0 1213.0,722.4 1213.5,722.7 1214.0,723.1 1214.5,723.5 1215.0,723.8 1215.5,724.2 1216.0,724.6 1216.5,724.9 1217.0,725.3 1217.5,725.6 1218.0,726.0 1218.5,726.3 1219.0,726.7 1219.5,727.0 1220.0,727.4 1220.5,727.7 1221.0,728.1 1221.5,728.4 1222.0,728.7 1222.5,729.1 1223.0,729.4 1223.5,729.7 1224.0,730.1 1224.5,730.4 1225.0,730.7 1225.5,731.1 1226.0,731.4 1226.5,731.7 1227.0,732.1 1227.5,732.4 1228.0,732.7 1228.5,733.0 1229.0,733.4 1229.5,733.7 1230.0,734.0 1230.5,734.3 1231.0,734.6 1231.5,735.0 1232.0,735.3 1232.5,735.6 1233.0,735.9 1233.5,736.2 1234.0,736.6 1234.5,736.9 1235.0,737.2 1235.5,737.5 1236.0,737.8 1236.5,738.1 1237.0,738.4 1237.5,738.8 1238.0,739.1 1238.5,739.4 1239.0,739.7 1239.5,740.0 1240.0,740.3 1240.5,740.6 1241.0,740.9 1241.5,741.2 1242.0,741.6 1242.5,741.9 1243.0,742.2 1243.5,742.5 1244.0,742.8 1244.5,743.1 1245.0,743.4 1245.5,743.7 1246.0,744.0 1246.5,744.3 1247.0,744.7 1247.5,745.0 1248.0,745.3 1248.5,745.6 1249.0,745.9 1249.5,746.2 1250.0,746.5 1250.5,746.8 1251.0,747.1 1251.5,747.4 1252.0,747.7 1252.5,748.0 1253.0,748.3 1253.5,748.6 1254.0,748.9 1254.5,749.2 1255.0,749.5 1255.5,749.7 1256.0,750.0 1256.5,750.3 1257.0,750.6 1257.5,750.9 1258.0,751.2 1258.5,751.5 1259.0,751.7 1259.5,752.0 1260.0,752.3 1260.5,752.6 1261.0,752.8 1261.5,753.1 1262.0,753.4 1262.5,753.6 1263.0,753.9 1263.5,754.2 1264.0,754.4 1264.5,754.7 1265.0,754.9 1265.5,755.2 1266.0,755.5 1266.5,755.7 1267.0,756.0 1267.5,756.2 1268.0,756.5 1268.5,756.7 1269.0,757.0 1269.5,757.2 1270.0,757.5 1270.5,757.7 1271.0,758.0 1271.5,758.2 1272.0,758.5 1272.5,758.7 1273.0,759.0 1273.5,759.2 1274.0,759.5 1274.5,759.7 1275.0,759.9 1275.5,760.2 1276.0,760.4 1276.5,760.7 1277.0,760.9 1277.5,761.1 1278.0,761.4 1278.5,761.6 1279.0,761.9 1279.5,762.1 1280.0,762.3 1280.5,762.6 1281.0,762.8 1281.5,763.0 1282.0,763.3 1282.5,763.5 1283.0,763.8 1283.5,764.0 1284.0,764.2 1284.5,764.5 1285.0,764.7 1285.5,764.9 1286.0,765.2 1286.5,765.4 1287.0,765.6 1287.5,765.9 1288.0,766.1 1288.5,766.3 1289.0,766.5 1289.5,766.8 1290.0,767.0 1290.5,767.2 1291.0,767.5 1291.5,767.7 1292.0,767.9 1292.5,768.1 1293.0,768.4 1293.5,768.6 1294.0,768.8 1294.5,769.0 1295.0,769.2 1295.5,769.5 1296.0,769.7 1296.5,769.9 1297.0,770.1 1297.5,770.3 1298.0,770.6 1298.5,770.8 1299.0,771.0 1299.5,771.2 1300.0,771.4 1300.5,771.6 1301.0,771.8 1301.5,772.1 1302.0,772.3 1302.5,772.5 1303.0,772.7 1303.5,772.9 1304.0,773.1 1304.5,773.3 1305.0,773.5 1305.5,773.7 1306.0,773.9 1306.5,774.1 1307.0,774.3 1307.5,774.5 1308.0,774.7 1308.5,775.0 1309.0,775.2 1309.5,775.4 1310.0,775.6 1310.5,775.8 1311.0,775.9 1311.5,776.1 1312.0,776.3 1312.5,776.5 1313.0,776.7 1313.5,776.9 1314.0,777.1 1314.5,777.3 1315.0,777.5 1315.5,777.7 1316.0,777.9 1316.5,778.1 1317.0,778.3 1317.5,778.5 1318.0,778.7 1318.5,778.9 1319.0,779.1 1319.5,779.3 1320.0,779.5 1320.5,779.7 1321.0,779.8 1321.5,780.0 1322.0,780.2 1322.5,780.4 1323.0,780.6 1323.5,780.8 1324.0,781.0 1324.5,781.2 1325.0,781.4 1325.5,781.6 1326.0,781.8 1326.5,782.0 1327.0,782.2 1327.5,782.4 1328.0,782.6 1328.5,782.8 1329.0,783.0 1329.5,783.2 1330.0,783.3 1330.5,783.5 1331.0,783.7 1331.5,783.9 1332.0,784.1 1332.5,784.3 1333.0,784.5 1333.5,784.7 1334.0,784.9 1334.5,785.1 1335.0,785.3 1335.5,785.5 1336.0,785.7 1336.5,785.8 1337.0,786.0 1337.5,786.2 1338.0,786.4 1338.5,786.6 1339.0,786.8 1339.5,787.0 1340.0,787.1 1340.5,787.3 1341.0,787.5 1341.5,787.7 1342.0,787.9 1342.5,788.0 1343.0,788.2 1343.5,788.4 1344.0,788.6 1344.5,788.7 1345.0,788.9 1345.5,789.1 1346.0,789.2 1346.5,789.4 1347.0,789.6 1347.5,789.8 1348.0,789.9 1348.5,790.1 1349.0,790.2 1349.5,790.4 1350.0,790.6 1350.5,790.7 1351.0,790.9 1351.5,791.1 1352.0,791.2 1352.5,791.4 1353.0,791.5 1353.5,791.7 1354.0,791.8 1354.5,792.0 1355.0,792.2 1355.5,792.3 1356.0,792.5 1356.5,792.6 1357.0,792.8 1357.5,792.9 1358.0,793.1 1358.5,793.2 1359.0,793.4 1359.5,793.5 1360.0,793.7 1360.5,793.9 1361.0,794.0 1361.5,794.2 1362.0,794.3 1362.5,794.5 1363.0,794.6 1363.5,794.8 1364.0,794.9 1364.5,795.1 1365.0,795.2 1365.5,795.4 1366.0,795.5 1366.5,795.7 1367.0,795.8 1367.5,796.0 1368.0,796.2 1368.5,796.3 1369.0,796.5 1369.5,796.6 1370.0,796.8 1370.5,796.9 1371.0,797.1 1371.5,797.2 1372.0,797.4 1372.5,797.5 1373.0,797.7 1373.5,797.8 1374.0,797.9 1374.5,798.1 1375.0,798.2 1375.5,798.4 1376.0,798.5 1376.5,798.7 1377.0,798.8 1377.5,799.0 1378.0,799.1 1378.5,799.2 1379.0,799.4 1379.5,799.5 1380.0,799.7 1380.5,799.8 1381.0,799.9 1381.5,800.1 1382.0,800.2 1382.5,800.3 1383.0,800.5 1383.5,800.6 1384.0,800.7 1384.5,800.8 1385.0,801.0 1385.5,801.1 1386.0,801.2 1386.5,801.3 1387.0,801.5 1387.5,801.6 1388.0,801.7 1388.5,801.8 1389.0,802.0 1389.5,802.1 1390.0,802.2 1390.5,802.3 1391.0,802.4 1391.5,802.5 1392.0,802.7 1392.5,802.8 1393.0,802.9 1393.5,803.0 1394.0,803.1 1394.5,803.2 1395.0,803.3 1395.5,803.5 1396.0,803.6 1396.5,803.7 1397.0,803.8 1397.5,803.9 1398.0,804.0 1398.5,804.1 1399.0,804.2 1399.5,804.3 1400.0,804.4 1400.5,804.5 1401.0,804.6 1401.5,804.7 1402.0,804.8 1402.5,804.9 1403.0,805.0 1403.5,805.1 1404.0,805.2 1404.5,805.3 1405.0,805.4 1405.5,805.5 1406.0,805.6 1406.5,805.7 1407.0,805.8 1407.5,805.9 1408.0,806.0 1408.5,806.1 1409.0,806.2 1409.5,806.3 1410.0,806.4 1410.5,806.5 1411.0,806.6 1411.5,806.7 1412.0,806.8 1412.5,806.9 1413.0,806.9 1413.5,807.0 1414.0,807.1 1414.5,807.2 1415.0,807.3 1415.5,807.4 1416.0,807.5 1416.5,807.6 1417.0,807.6 1417.5,807.7 1418.0,807.8 1418.5,807.9 1419.0,808.0 1419.5,808.1 1420.0,808.2 1420.5,808.2 1421.0,808.3 1421.5,808.4 1422.0,808.5 1422.5,808.6 1423.0,808.6 1423.5,808.7 1424.0,808.8 1424.5,808.9 1425.0,809.0 1425.5,809.1 1426.0,809.1 1426.5,809.2 1427.0,809.3 1427.5,809.4 1428.0,809.5 1428.5,809.5 1429.0,809.6 1429.5,809.7 1430.0,809.8 1430.5,809.9 1431.0,810.0 1431.5,810.0 1432.0,810.1 1432.5,810.2 1433.0,810.3 1433.5,810.4 1434.0,810.5 1434.5,810.5 1435.0,810.6 1435.5,810.7 1436.0,810.8"/>
</g>
<rect x="588" y="138" width="1" height="1299" fill="#40ff40"/>
<rect x="975" y="138" width="1" height="1299" fill="#40ff40"/>
<rect x="589" y="138" width="1" height="1" fill="#000"/><rect x="974" y="138" width="1" height="1" fill="#000"/>
<polygon shape-rendering="crispEdges" points="590,99 608,99 608,125.6 590,136" fill="#40ff40"/>
<polygon shape-rendering="crispEdges" points="956,99 974,99 974,136 956,125.6" fill="#40ff40"/>
<text x="91.00" y="911.80" id="t0" font-size="22.6" fill="#a0a0a0" font-weight="normal" textLength="11.80" lengthAdjust="spacingAndGlyphs">0</text>
<text x="79.30" y="833.80" id="t1" font-size="22.6" fill="#a0a0a0" font-weight="normal" textLength="23.58" lengthAdjust="spacingAndGlyphs">20</text>
<text x="79.30" y="755.80" id="t2" font-size="22.6" fill="#a0a0a0" font-weight="normal" textLength="23.58" lengthAdjust="spacingAndGlyphs">40</text>
<text x="79.30" y="677.80" id="t3" font-size="22.6" fill="#a0a0a0" font-weight="normal" textLength="23.58" lengthAdjust="spacingAndGlyphs">60</text>
<text x="79.30" y="600.80" id="t4" font-size="22.6" fill="#a0a0a0" font-weight="normal" textLength="23.58" lengthAdjust="spacingAndGlyphs">80</text>
<text x="67.30" y="522.80" id="t5" font-size="22.6" fill="#a0a0a0" font-weight="normal" textLength="35.36" lengthAdjust="spacingAndGlyphs">100</text>
<text x="67.30" y="444.80" id="t6" font-size="22.6" fill="#a0a0a0" font-weight="normal" textLength="35.36" lengthAdjust="spacingAndGlyphs">120</text>
<text x="67.30" y="366.80" id="t7" font-size="22.6" fill="#a0a0a0" font-weight="normal" textLength="35.36" lengthAdjust="spacingAndGlyphs">140</text>
<text x="67.30" y="289.80" id="t8" font-size="22.6" fill="#a0a0a0" font-weight="normal" textLength="35.36" lengthAdjust="spacingAndGlyphs">160</text>
<text x="67.30" y="211.80" id="t9" font-size="22.6" fill="#a0a0a0" font-weight="normal" textLength="35.36" lengthAdjust="spacingAndGlyphs">180</text>
<text x="91.14" y="963.80" id="t10" font-size="22.6" fill="#a0a0a0" font-weight="normal" textLength="11.80" lengthAdjust="spacingAndGlyphs">8</text>
<text x="91.23" y="1059.80" id="t11" font-size="22.6" fill="#a0a0a0" font-weight="normal" textLength="11.80" lengthAdjust="spacingAndGlyphs">7</text>
<text x="91.13" y="1155.80" id="t12" font-size="22.6" fill="#a0a0a0" font-weight="normal" textLength="11.80" lengthAdjust="spacingAndGlyphs">6</text>
<text x="91.10" y="1250.80" id="t13" font-size="22.6" fill="#a0a0a0" font-weight="normal" textLength="11.80" lengthAdjust="spacingAndGlyphs">5</text>
<text x="90.75" y="1346.80" id="t14" font-size="22.6" fill="#a0a0a0" font-weight="normal" textLength="11.80" lengthAdjust="spacingAndGlyphs">4</text>
<text x="91.11" y="1441.80" id="t15" font-size="22.6" fill="#a0a0a0" font-weight="normal" textLength="11.80" lengthAdjust="spacingAndGlyphs">3</text>
<text x="396.83" y="129.90" id="t16" font-size="22.6" fill="#a0a0a0" font-weight="normal" textLength="43.33" lengthAdjust="spacingAndGlyphs">47.2</text>
<text x="860.64" y="129.90" id="t17" font-size="22.6" fill="#a0a0a0" font-weight="normal" textLength="54.45" lengthAdjust="spacingAndGlyphs">47.21</text>
<text x="1330.64" y="129.90" id="t18" font-size="22.6" fill="#a0a0a0" font-weight="normal" textLength="55.00" lengthAdjust="spacingAndGlyphs">47.22</text>
<text x="455.10" y="127.85" id="t19" font-size="22.6" fill="#fff" font-weight="normal" textLength="125.69" lengthAdjust="spacingAndGlyphs">t=47.203650</text>
<text x="983.00" y="127.85" id="t20" font-size="22.6" fill="#fff" font-weight="normal" textLength="126.12" lengthAdjust="spacingAndGlyphs">t=47.211866</text>
<text x="724.14" y="127.85" id="t21" font-size="22.6" fill="#fff" font-weight="normal" textLength="115.35" lengthAdjust="spacingAndGlyphs">Δt=8.22 ms</text>
<text x="18.80" y="39.50" id="t22" font-size="22.2" fill="#fff" font-weight="normal" textLength="78.56" lengthAdjust="spacingAndGlyphs">Settings</text>
<text transform="translate(27,599.99) rotate(-90)" id="t23" font-size="23.5" fill="#a0a0a0" font-weight="normal" textLength="118.40" lengthAdjust="spacingAndGlyphs">current (µA)</text>
<text transform="translate(27,1407.67) rotate(-90)" id="t24" font-size="23.5" fill="#a0a0a0" font-weight="normal" textLength="136.74" lengthAdjust="spacingAndGlyphs">current_range</text>
<text x="982.30" y="183.84" id="t25" font-size="27" fill="#c0c0c0" font-weight="bold" word-spacing="-1.6" textLength="181.89" lengthAdjust="spacingAndGlyphs">µ=+93.1012 µA</text>
<text x="983.23" y="215.84" id="t26" font-size="27" fill="#c0c0c0" font-weight="bold" word-spacing="-1.6" textLength="182.85" lengthAdjust="spacingAndGlyphs">σ=+34.7356 µA</text>
<text x="982.56" y="247.84" id="t27" font-size="27" fill="#c0c0c0" font-weight="bold" word-spacing="-1.6" textLength="211.54" lengthAdjust="spacingAndGlyphs">min=+13.8055 µA</text>
<text x="982.56" y="279.84" id="t28" font-size="27" fill="#c0c0c0" font-weight="bold" word-spacing="-1.6" textLength="217.97" lengthAdjust="spacingAndGlyphs">max=+135.099 µA</text>
<text x="982.56" y="311.84" id="t29" font-size="27" fill="#c0c0c0" font-weight="bold" word-spacing="-1.6" textLength="211.74" lengthAdjust="spacingAndGlyphs">p2p=+121.294 µA</text>
<text x="983.82" y="343.84" id="t30" font-size="27" fill="#c0c0c0" font-weight="bold" word-spacing="-1.6" textLength="191.91" lengthAdjust="spacingAndGlyphs">∫=+212.490 pAh</text>
<text x="982.44" y="375.84" id="t31" font-size="27" fill="#c0c0c0" font-weight="bold" word-spacing="-1.6" textLength="195.29" lengthAdjust="spacingAndGlyphs">Δt=+8.21650 ms</text>
<text x="982.28" y="979.84" id="t32" font-size="27" fill="#c0c0c0" font-weight="bold" word-spacing="-1.6" textLength="142.71" lengthAdjust="spacingAndGlyphs">µ=+5.00000</text>
<text x="983.22" y="1011.84" id="t33" font-size="27" fill="#c0c0c0" font-weight="bold" word-spacing="-1.6" textLength="144.12" lengthAdjust="spacingAndGlyphs">σ=+0.00000</text>
<text x="982.56" y="1043.84" id="t34" font-size="27" fill="#c0c0c0" font-weight="bold" word-spacing="-1.6" textLength="172.36" lengthAdjust="spacingAndGlyphs">min=+5.00000</text>
<text x="982.55" y="1075.84" id="t35" font-size="27" fill="#c0c0c0" font-weight="bold" word-spacing="-1.6" textLength="178.53" lengthAdjust="spacingAndGlyphs">max=+5.00000</text>
<text x="982.56" y="1107.84" id="t36" font-size="27" fill="#c0c0c0" font-weight="bold" word-spacing="-1.6" textLength="172.36" lengthAdjust="spacingAndGlyphs">p2p=+0.00000</text>
<text x="982.44" y="1139.84" id="t37" font-size="27" fill="#c0c0c0" font-weight="bold" word-spacing="-1.6" textLength="195.29" lengthAdjust="spacingAndGlyphs">Δt=+8.21650 ms</text>
</svg>
</body></html>
